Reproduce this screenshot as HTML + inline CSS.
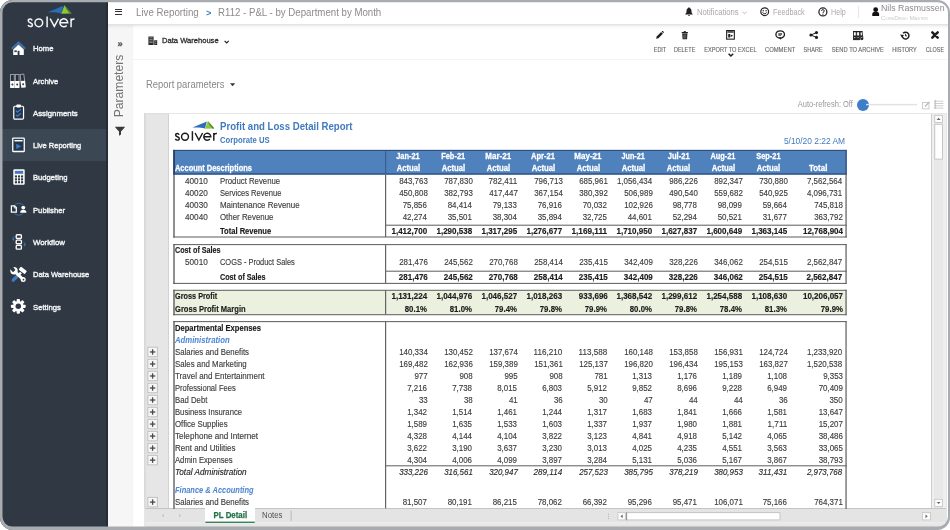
<!DOCTYPE html>
<html><head><meta charset="utf-8"><title>Solver - Live Reporting</title>
<style>
html,body{margin:0;padding:0;background:#fff;}
body{width:950px;height:530px;overflow:hidden;position:relative;font-family:"Liberation Sans", sans-serif;}
#root{position:absolute;left:0;top:0;width:950px;height:530px;overflow:hidden;will-change:transform;filter:blur(0.4px);}
#root span{position:absolute;white-space:pre;display:block;}
#root div{box-sizing:border-box;}
svg{position:absolute;overflow:visible;}
</style></head><body><div id="root">
<div style="position:absolute;left:0px;top:0px;width:950px;height:530px;background:#ffffff;"></div>
<div style="position:absolute;left:0px;top:0px;width:108px;height:530px;background:#2f3843;"></div>
<div style="position:absolute;left:0px;top:129.3px;width:108px;height:32px;background:#3c4754;"></div>
<div style="position:absolute;left:105.8px;top:0px;width:2.2px;height:530px;background:#272d36;"></div>
<svg style="left:0;top:0" width="108" height="32" viewBox="0 0 108 32"><g transform="translate(27.5 27.2) scale(1.12) translate(-174.9 -140.7)">
<path d="M192.5 127.6 L206.9 121.5 L205 128.5 C201 127.3 196.5 127.2 192.5 127.6Z" fill="#2a6db8"/>
<path d="M207.9 121.0 L205 128.7 L214.4 128.5Z" fill="#8dc63f"/>
<path d="M207.9 121.0 L214.4 128.5 L212.4 128.55 L209.3 124.2Z" fill="#35651f" opacity=".7"/>
<g fill="none" stroke="#f4f5f7" stroke-width="1.35">
<path d="M179.1 134.7 C178.7 133.7 177.9 133.4 177.3 133.4 C176.2 133.4 175.6 134.1 175.6 134.9 C175.6 136 176.6 136.4 177.4 136.7 C178.4 137.1 179.3 137.5 179.3 138.5 C179.3 139.5 178.4 140.1 177.4 140.1 C176.4 140.1 175.7 139.6 175.4 138.7"/>
<circle cx="185" cy="136.75" r="3.45"/>
<path d="M192.4 131.2 V140.7"/>
<path d="M195.1 133 L198.85 140 L202.6 133" stroke-linejoin="miter"/>
<path d="M203.9 136.75 H210.8 A3.5 3.5 0 1 0 209.9 139.1"/>
<path d="M213.8 133 V140.7 M213.8 135.8 C213.8 134.1 215 133.3 216.9 133.5"/>
</g></g></svg>
<svg style="left:11px;top:41px" width="15" height="15" viewBox="0 0 15 15"><path d="M7.5 0 L0 7 L1.7 8.6 L7.5 3.2 L13.3 8.6 L15 7 Z" fill="#3f6da6"/>
<path d="M7.5 3.6 L2.2 8.6 V14 H12.8 V8.6 Z" fill="#ffffff"/>
<rect x="6.6" y="9.8" width="1.9" height="4.2" fill="#2f3843"/><rect x="3.4" y="9.4" width="2.4" height="1.7" fill="#2f3843"/></svg>
<svg style="left:10.4px;top:73.9px" width="16.4" height="14.2" viewBox="0 0 16.4 14.2"><rect x="0.55" y="0.45" width="3.7" height="7.4" fill="#262d37" stroke="#a3a9b1" stroke-width=".9"/><rect x="0.1" y="7.1" width="4.6" height="6.8" rx=".5" fill="#ffffff"/><circle cx="2.4" cy="10.5" r="1" fill="#2f3843"/><rect x="5.3500000000000005" y="0.45" width="3.7" height="7.4" fill="#262d37" stroke="#a3a9b1" stroke-width=".9"/><rect x="4.9" y="7.1" width="4.6" height="6.8" rx=".5" fill="#ffffff"/><circle cx="7.2" cy="10.5" r="1" fill="#2f3843"/><g transform="rotate(-7 11.4 13.9)"><rect x="11.75" y="0.45" width="3.7" height="7.4" fill="#262d37" stroke="#a3a9b1" stroke-width=".9"/><rect x="11.3" y="7.1" width="4.6" height="6.8" rx=".5" fill="#ffffff"/><circle cx="13.600000000000001" cy="10.5" r="1" fill="#2f3843"/></g></svg>
<svg style="left:12.7px;top:104.2px" width="11.3" height="16" viewBox="0 0 12 17"><rect x="0.8" y="2.4" width="10.4" height="13.6" rx="1.2" fill="#26344b" stroke="#ffffff" stroke-width="1.3"/>
<rect x="3.6" y="0.6" width="4.8" height="3.2" rx=".8" fill="#ffffff"/>
<path d="M3.2 7.2 L4.8 8.8 L8.4 5.6" fill="none" stroke="#3d7dc8" stroke-width="1.3"/>
<path d="M3.2 11.4 L4.8 13 L8.4 9.8" fill="none" stroke="#3d7dc8" stroke-width="1.3"/></svg>
<svg style="left:11.8px;top:136.7px" width="13" height="15.6" viewBox="0 0 14 16"><rect x="0.8" y="0.8" width="12.4" height="14.4" rx=".6" fill="#26344b" stroke="#ffffff" stroke-width="1.4"/>
<rect x="2.6" y="2.8" width="8.8" height="1.6" fill="#ffffff"/>
<path d="M4.6 6.8 L10 9.6 L4.6 12.4 Z" fill="#3d7dc8"/></svg>
<svg style="left:12.8px;top:169px" width="12" height="16" viewBox="0 0 12 16"><rect x="0.3" y="0.3" width="11.4" height="15.4" rx="1.2" fill="#ffffff"/>
<rect x="1.8" y="1.8" width="8.4" height="3" fill="#4878b4"/>
<g fill="#2f3843"><rect x="1.9" y="6.4" width="2.1" height="2.1"/><rect x="4.95" y="6.4" width="2.1" height="2.1"/><rect x="8" y="6.4" width="2.1" height="2.1"/>
<rect x="1.9" y="9.3" width="2.1" height="2.1"/><rect x="4.95" y="9.3" width="2.1" height="2.1"/><rect x="8" y="9.3" width="2.1" height="2.1"/>
<rect x="1.9" y="12.2" width="2.1" height="2.1"/><rect x="4.95" y="12.2" width="2.1" height="2.1"/><rect x="8" y="12.2" width="2.1" height="2.1"/></g></svg>
<svg style="left:10px;top:202px" width="18" height="16" viewBox="0 0 18 16"><circle cx="8.8" cy="7.2" r="6" fill="none" stroke="#3468a8" stroke-width="1.1"/>
<rect x="-0.2" y="2.6" width="8" height="8.8" fill="#2f3843"/><rect x="9.4" y="3" width="8" height="8.4" fill="#2f3843"/>
<path d="M1.4 3.9 H4.6 L6.3 5.6 V10.2 H1.4 Z" fill="none" stroke="#ffffff" stroke-width="1.25"/><path d="M4.3 3.6 V6 H6.6" fill="none" stroke="#ffffff" stroke-width=".8"/>
<circle cx="13.3" cy="5.6" r="1.95" fill="#ffffff"/><path d="M10.2 10.8 C10.2 8.5 11.4 7.8 13.3 7.8 C15.2 7.8 16.4 8.5 16.4 10.8 Z" fill="#ffffff"/></svg>
<svg style="left:10.5px;top:233.8px" width="16" height="16.4" viewBox="0 0 16 16.4"><g fill="none" stroke="#ffffff" stroke-width="1.35"><rect x="5.2" y="0.8" width="5.2" height="3.7" rx=".9"/><rect x="5.2" y="6.1" width="5.2" height="3.7" rx=".9"/><rect x="5.2" y="11.4" width="5.2" height="3.7" rx=".9"/></g>
<path d="M3.6 2.6 C2 3.2 1.6 4.4 2.2 5.6 M12.6 8.2 C14 8.8 14.4 10 13.8 11.2" fill="none" stroke="#3d7dc8" stroke-width=".9"/>
<path d="M1.2 4.6 L3.6 5 L2.4 7Z M14.8 10.2 L12.4 10.6 L13.6 12.6Z" fill="#3d7dc8"/></svg>
<svg style="left:10.3px;top:266.6px" width="17" height="15" viewBox="0 0 17 15"><path d="M11 5.6 L4.4 12" stroke="#ffffff" stroke-width="2.3"/>
<path d="M6.4 10 L3.2 13.2" stroke="#3d7dc8" stroke-width="3.3" stroke-linecap="round"/>
<rect x="9" y="1.4" width="7.6" height="3.9" rx=".7" fill="#ffffff" transform="rotate(38 12.8 3.3)"/>
<path d="M4.4 4.2 L12.6 12" stroke="#ffffff" stroke-width="3.1"/>
<circle cx="4" cy="3.8" r="3.7" fill="#ffffff"/><path d="M-0.6 1.2 L2.4 -1.2 L5.4 3 L3 5.2Z" fill="#2f3843"/>
<circle cx="13.2" cy="12.4" r="2.5" fill="#ffffff"/><circle cx="13.5" cy="12.7" r=".85" fill="#2f3843"/></svg>
<svg style="left:10.8px;top:298.7px" width="14.6" height="14.6" viewBox="0 0 16 16"><rect x="6.2" y="-0.1" width="3.6" height="4" rx=".9" fill="#ffffff" transform="rotate(0 8 8)"/><rect x="6.2" y="-0.1" width="3.6" height="4" rx=".9" fill="#ffffff" transform="rotate(45 8 8)"/><rect x="6.2" y="-0.1" width="3.6" height="4" rx=".9" fill="#ffffff" transform="rotate(90 8 8)"/><rect x="6.2" y="-0.1" width="3.6" height="4" rx=".9" fill="#ffffff" transform="rotate(135 8 8)"/><rect x="6.2" y="-0.1" width="3.6" height="4" rx=".9" fill="#ffffff" transform="rotate(180 8 8)"/><rect x="6.2" y="-0.1" width="3.6" height="4" rx=".9" fill="#ffffff" transform="rotate(225 8 8)"/><rect x="6.2" y="-0.1" width="3.6" height="4" rx=".9" fill="#ffffff" transform="rotate(270 8 8)"/><rect x="6.2" y="-0.1" width="3.6" height="4" rx=".9" fill="#ffffff" transform="rotate(315 8 8)"/><circle cx="8" cy="8" r="5.7" fill="#ffffff"/><circle cx="8" cy="8" r="3" fill="#2f3843"/></svg>
<div style="position:absolute;left:108px;top:0px;width:842px;height:24px;background:#ffffff;"></div>
<div style="position:absolute;left:115px;top:8.6px;width:6.6px;height:1.2px;background:#333;"></div>
<div style="position:absolute;left:115px;top:11.2px;width:6.6px;height:1.2px;background:#333;"></div>
<div style="position:absolute;left:115px;top:13.8px;width:6.6px;height:1.2px;background:#333;"></div>
<svg style="left:685px;top:7.4px" width="8" height="9" viewBox="0 0 8 9"><path d="M4 0.3 C4.5 0.3 4.8 .7 4.7 1.1 C6 1.6 6.5 2.8 6.5 4.2 C6.5 5.8 7 6.4 7.7 7 V7.5 H0.3 V7 C1 6.4 1.5 5.8 1.5 4.2 C1.5 2.8 2 1.6 3.3 1.1 C3.2 .7 3.5 .3 4 .3Z M3 7.9 H5 C5 8.5 4.6 8.8 4 8.8 C3.4 8.8 3 8.5 3 7.9Z" fill="#222"/></svg>
<svg style="left:742.4px;top:11px" width="5" height="4" viewBox="0 0 5 4"><path d="M0.5 0.8 L2.5 2.8 L4.5 0.8" fill="none" stroke="#b4b4b4" stroke-width=".9"/></svg>
<svg style="left:760.4px;top:6.8px" width="9.4" height="9.4" viewBox="0 0 9.4 9.4"><circle cx="4.7" cy="4.7" r="3.9" fill="none" stroke="#222" stroke-width="1.2"/><circle cx="3.3" cy="3.7" r=".7" fill="#222"/><circle cx="6.1" cy="3.7" r=".7" fill="#222"/><path d="M2.6 5.4 C3.4 7.1 6 7.1 6.8 5.4" fill="none" stroke="#222" stroke-width="1"/></svg>
<svg style="left:817.6px;top:6.7px" width="9.8" height="9.8" viewBox="0 0 9.8 9.8"><circle cx="4.9" cy="4.9" r="4" fill="none" stroke="#222" stroke-width="1.25"/><path d="M3.5 3.9 C3.5 2.2 6.3 2.2 6.3 3.9 C6.3 4.9 4.9 4.9 4.9 6" fill="none" stroke="#222" stroke-width="1"/><circle cx="4.9" cy="7.2" r=".6" fill="#222"/></svg>
<div style="position:absolute;left:857.6px;top:6px;width:1px;height:12px;background:#e6e6e6;"></div>
<svg style="left:872.0px;top:6.8px" width="7.4" height="9.3" viewBox="0 0 8 10"><circle cx="4" cy="2.9" r="2.6" fill="#111"/><path d="M0.3 9.6 V7.8 C0.3 6 1.8 5.2 4 5.2 C6.2 5.2 7.7 6 7.7 7.8 V9.6Z" fill="#111"/></svg>
<div style="position:absolute;left:108px;top:25px;width:23.5px;height:505px;background:#f6f6f6;"></div>
<div style="position:absolute;left:131.5px;top:25px;width:1.5px;height:505px;background:linear-gradient(90deg,#ededed,#fafafa);"></div>
<div style="position:absolute;left:108px;top:24px;width:842px;height:5px;background:linear-gradient(rgba(0,0,0,.13),rgba(0,0,0,.04) 45%,rgba(0,0,0,0));"></div>
<svg style="left:114.6px;top:125.8px" width="10" height="10" viewBox="0 0 10 10"><path d="M0.3 0.8 H9.7 V1.6 L6 5.4 V8.4 L4 9.8 V5.4 L0.3 1.6Z" fill="#3a3a3a"/></svg>
<svg style="left:148px;top:36.4px" width="10" height="9.4" viewBox="0 0 10 9.4"><path d="M0.4 0.4 H5.6 V9 H0.4Z M6.2 4.2 H9.2 V9 H6.2Z" fill="#2a2a2a"/><g fill="#fff" opacity=".75"><rect x="1.3" y="1.6" width="3.4" height=".55"/><rect x="1.3" y="3.2" width="3.4" height=".55"/><rect x="1.3" y="4.8" width="3.4" height=".55"/><rect x="1.3" y="6.4" width="3.4" height=".55"/><rect x="7" y="5.6" width="1.4" height=".55"/><rect x="7" y="7.1" width="1.4" height=".55"/></g></svg>
<svg style="left:223.6px;top:39.6px" width="5.4" height="4" viewBox="0 0 5.4 4"><path d="M0.6 0.8 L2.7 2.9 L4.8 0.8" fill="none" stroke="#222" stroke-width="1.2"/></svg>
<svg style="left:655.0px;top:31.0px" width="9.2" height="8.6" viewBox="0 0 10 10"><path d="M1 9 L1.6 6.4 L6.8 1.2 L8.8 3.2 L3.6 8.4 Z" fill="#1e1e1e"/><path d="M7.4 .6 L8 0 C8.4 -.2 8.8 0 9.2 .4 L9.6 .8 C10 1.2 10 1.6 9.8 2 L9.4 2.6Z" fill="#1e1e1e"/></svg>
<svg style="left:681.4px;top:31.4px" width="7.6" height="8.6" viewBox="0 0 8 10"><rect x="0.4" y="1.2" width="7.2" height="1.3" rx=".3" fill="#1e1e1e"/><rect x="2.7" y="0.2" width="2.6" height="1.3" fill="#1e1e1e"/><path d="M1 3 H7 L6.6 9.7 H1.4Z" fill="#1e1e1e"/><g stroke="#fff" stroke-width=".6" opacity=".55"><path d="M2.8 4 V8.8 M4 4 V8.8 M5.2 4 V8.8"/></g></svg>
<svg style="left:726.0px;top:30.2px" width="9.0" height="9.7" viewBox="0 0 9.6 10.6"><rect x="0.6" y="0.6" width="8.4" height="9.4" fill="none" stroke="#1e1e1e" stroke-width="1.2"/><rect x="1.4" y="1.4" width="6.8" height="1.5" fill="#1e1e1e"/><path d="M2.3 4.3 H4.4 V8.3 H2.3Z M5 4.9 L7.7 6.3 L5 7.7Z" fill="#1e1e1e"/></svg>
<svg style="left:727.5px;top:53px" width="5.8" height="4" viewBox="0 0 5.8 4"><path d="M0.6 0.7 L2.9 3 L5.2 0.7" fill="none" stroke="#1e1e1e" stroke-width="1.5"/></svg>
<svg style="left:774.8px;top:30.0px" width="10.4" height="10" viewBox="0 0 10.4 10"><ellipse cx="5.2" cy="4.4" rx="4.3" ry="3.6" fill="#fff" stroke="#1e1e1e" stroke-width="1.3"/><path d="M3.9 7.6 L5.5 9.8 L6.7 7.6Z" fill="#1e1e1e"/><path d="M3.3 3.5 H7.1 M3.3 4.5 H7.1 M3.3 5.5 H6.2" stroke="#1e1e1e" stroke-width=".65"/></svg>
<svg style="left:808.6px;top:31.0px" width="9.4" height="8" viewBox="0 0 9.4 8"><path d="M7.4 1.6 L2 4 L7.4 6.4" fill="none" stroke="#1e1e1e" stroke-width="1"/><circle cx="7.5" cy="1.6" r="1.55" fill="#1e1e1e"/><circle cx="1.9" cy="4" r="1.55" fill="#1e1e1e"/><circle cx="7.5" cy="6.4" r="1.55" fill="#1e1e1e"/></svg>
<svg style="left:852.6px;top:31.0px" width="10.4" height="9.2" viewBox="0 0 10.4 9.2"><g fill="#fff" stroke="#1e1e1e" stroke-width=".85"><rect x="0.5" y="0.5" width="2.7" height="8.2"/><rect x="3.7" y="0.5" width="2.7" height="8.2"/><path d="M7 0.9 L9.1 0.5 L10 8.3 L7.9 8.7Z"/></g>
<path d="M0.1 0 H6.8 V1.3 H0.1Z M6.7 0.3 L9.4 -0.1 L9.55 1.1 L6.85 1.5Z" fill="#1e1e1e"/>
<path d="M0.5 4.4 H3.2 V8.7 H0.5Z M3.7 4.4 H6.4 V8.7 H3.7Z M7.45 4.5 L9.55 4.15 L10 8.3 L7.9 8.7Z" fill="#1e1e1e"/>
<g fill="#fff"><rect x="1.4" y="6" width=".9" height="1.1"/><rect x="4.6" y="6" width=".9" height="1.1"/><rect x="8.35" y="5.9" width=".8" height="1"/></g></svg>
<svg style="left:899.6px;top:30.6px" width="10.2" height="9.4" viewBox="0 0 10.2 9.4"><path d="M2.2 4.7 A3.4 3.4 0 1 0 3.1 2.3" fill="none" stroke="#1e1e1e" stroke-width="1.5"/><path d="M0.1 3.6 L4.1 3.9 L1.9 6.6Z" fill="#1e1e1e"/><path d="M5.5 2.8 V4.9 H7.1" fill="none" stroke="#1e1e1e" stroke-width=".95"/></svg>
<svg style="left:930.9px;top:31.3px" width="8" height="8" viewBox="0 0 8 8"><path d="M1.3 1.3 L6.7 6.7 M6.7 1.3 L1.3 6.7" stroke="#1e1e1e" stroke-width="2.5" stroke-linecap="round"/></svg>
<div style="position:absolute;left:133px;top:59px;width:814px;height:1px;background:#f4f4f4;"></div>
<svg style="left:229.8px;top:83.4px" width="5.2" height="3.6" viewBox="0 0 5.2 3.6"><path d="M0.5 0.5 H4.7 L2.6 3Z" fill="#333" stroke="#333" stroke-width=".5" stroke-linejoin="round"/></svg>
<div style="position:absolute;left:856.9px;top:98.6px;width:12px;height:12px;background:#3e7ec9;border-radius:50%;"></div>
<svg style="left:922px;top:100.6px" width="8.4" height="8.4" viewBox="0 0 8.4 8.4"><rect x="0.5" y="1.5" width="6.4" height="6.4" fill="none" stroke="#c8c8c8" stroke-width=".9"/><path d="M3 5.6 L7.4 1" stroke="#bdbdbd" stroke-width="1.4"/></svg>
<svg style="left:934.4px;top:100.2px" width="9.4" height="9.2" viewBox="0 0 9.4 9.2"><g stroke="#c8c8c8" stroke-width=".9"><path d="M0 1.2 H9.4 M0 3.5 H9.4 M0 5.8 H9.4 M0 8.1 H9.4"/><path d="M1.3 0 V9" stroke-width="1.6"/></g></svg>
<div style="position:absolute;left:144px;top:112.6px;width:803px;height:413px;background:#e6e6e6;"></div>
<div style="position:absolute;left:145px;top:113.6px;width:801px;height:411px;background:#ffffff;"></div>
<div style="position:absolute;left:144px;top:113px;width:24.6px;height:395px;background:#e6e6e6;"></div>
<div style="position:absolute;left:144px;top:113px;width:3px;height:395px;background:linear-gradient(90deg,#d6d6d6,#e6e6e6);"></div>
<div style="position:absolute;left:147px;top:113px;width:21px;height:2px;background:linear-gradient(#dcdcdc,#e6e6e6);"></div>
<div style="position:absolute;left:168px;top:113.6px;width:1px;height:394.4px;background:#d2d2d2;"></div>
<svg style="left:0;top:0" width="240" height="150" viewBox="0 0 240 150"><g transform="translate(174.9 140.7) scale(1) translate(-174.9 -140.7)">
<path d="M192.5 127.6 L206.9 121.5 L205 128.5 C201 127.3 196.5 127.2 192.5 127.6Z" fill="#2a6db8"/>
<path d="M207.9 121.0 L205 128.7 L214.4 128.5Z" fill="#8dc63f"/>
<path d="M207.9 121.0 L214.4 128.5 L212.4 128.55 L209.3 124.2Z" fill="#35651f" opacity=".7"/>
<g fill="none" stroke="#1c1c1c" stroke-width="1.45">
<path d="M179.1 134.7 C178.7 133.7 177.9 133.4 177.3 133.4 C176.2 133.4 175.6 134.1 175.6 134.9 C175.6 136 176.6 136.4 177.4 136.7 C178.4 137.1 179.3 137.5 179.3 138.5 C179.3 139.5 178.4 140.1 177.4 140.1 C176.4 140.1 175.7 139.6 175.4 138.7"/>
<circle cx="185" cy="136.75" r="3.45"/>
<path d="M192.4 131.2 V140.7"/>
<path d="M195.1 133 L198.85 140 L202.6 133" stroke-linejoin="miter"/>
<path d="M203.9 136.75 H210.8 A3.5 3.5 0 1 0 209.9 139.1"/>
<path d="M213.8 133 V140.7 M213.8 135.8 C213.8 134.1 215 133.3 216.9 133.5"/>
</g></g></svg>
<div style="position:absolute;left:931px;top:113.6px;width:15px;height:394.4px;background:#e8e8e8;"></div>
<div style="position:absolute;left:931px;top:113.6px;width:1px;height:394.4px;background:#cdcdcd;"></div>
<div style="position:absolute;left:932px;top:113.6px;width:2px;height:394.4px;background:#efefef;"></div>
<div style="position:absolute;left:943px;top:113.6px;width:3px;height:394.4px;background:#efefef;"></div>
<!--vs-->
<div style="position:absolute;left:145px;top:508px;width:801px;height:14.2px;background:#e4e4e4;"></div>
<div style="position:absolute;left:145px;top:522.2px;width:801px;height:4.6px;background:linear-gradient(#ececec,#e4e4e4);"></div>
<div style="position:absolute;left:145px;top:507.5px;width:801px;height:1px;background:#c4c4c4;"></div>
<div style="position:absolute;left:205.4px;top:508px;width:49.4px;height:14.4px;background:#ffffff;"></div>
<!--POSTL-->
<svg style="left:0;top:0" width="950" height="530" viewBox="0 0 950 530"><rect x="866" y="103.9" width="51" height="1.4" fill="#e2e2e2"/><rect x="173.2" y="149.9" width="673.5999999999999" height="24.7" fill="#4f81bd"/><rect x="173.2" y="149.9" width="673.5999999999999" height="1.1" fill="#34507a"/><rect x="173.2" y="173.3" width="673.5999999999999" height="1.3" fill="#2f4f80"/><rect x="173.2" y="149.9" width="1.8" height="24.7" fill="#2c4165"/><rect x="845.3" y="149.9" width="1.5" height="24.7" fill="#3a5a8c"/><rect x="385.0" y="151" width="1.2" height="22.4" fill="#3a5f97"/><rect x="173.2" y="236.475" width="673.5999999999999" height="1.05" fill="#646464"/><rect x="173.325" y="174.075" width="1.35" height="63.45000000000002" fill="#5a5a5a"/><rect x="845.425" y="174.075" width="1.25" height="63.45000000000002" fill="#646464"/><rect x="385.0" y="174.6" width="1.2" height="62.400000000000006" fill="#646464"/><rect x="386" y="224.67499999999998" width="460.79999999999995" height="1.05" fill="#646464"/><rect x="173.2" y="244.075" width="673.5999999999999" height="1.05" fill="#646464"/><rect x="173.2" y="282.875" width="673.5999999999999" height="1.05" fill="#646464"/><rect x="173.325" y="244.075" width="1.35" height="39.849999999999966" fill="#5a5a5a"/><rect x="845.425" y="244.075" width="1.25" height="39.849999999999966" fill="#646464"/><rect x="385.0" y="244.6" width="1.2" height="38.79999999999998" fill="#646464"/><rect x="386" y="270.675" width="460.79999999999995" height="1.05" fill="#646464"/><rect x="173.2" y="290.3" width="673.5999999999999" height="24.399999999999977" fill="#ebf1de"/><rect x="173.2" y="289.77500000000003" width="673.5999999999999" height="1.05" fill="#646464"/><rect x="173.2" y="314.175" width="673.5999999999999" height="1.05" fill="#646464"/><rect x="173.325" y="289.77500000000003" width="1.35" height="25.449999999999932" fill="#5a5a5a"/><rect x="845.425" y="289.77500000000003" width="1.25" height="25.449999999999932" fill="#646464"/><rect x="385.0" y="290.3" width="1.2" height="24.399999999999977" fill="#646464"/><rect x="173.2" y="321.07500000000005" width="673.5999999999999" height="1.05" fill="#646464"/><rect x="173.325" y="321.07500000000005" width="1.35" height="187.8499999999999" fill="#5a5a5a"/><rect x="845.425" y="321.07500000000005" width="1.25" height="187.8499999999999" fill="#646464"/><rect x="385.0" y="321.6" width="1.2" height="186.79999999999995" fill="#646464"/><rect x="147.4" y="346.75" width="10.4" height="10.4" fill="#bdbdbd"/><rect x="148.3" y="347.65" width="8.6" height="8.6" fill="#f6f6f6"/><rect x="149.9" y="351.3" width="5.4" height="1.3" fill="#4a4a4a"/><rect x="151.95" y="349.25" width="1.3" height="5.4" fill="#4a4a4a"/><rect x="147.4" y="358.77" width="10.4" height="10.4" fill="#bdbdbd"/><rect x="148.3" y="359.66999999999996" width="8.6" height="8.6" fill="#f6f6f6"/><rect x="149.9" y="363.32" width="5.4" height="1.3" fill="#4a4a4a"/><rect x="151.95" y="361.27" width="1.3" height="5.4" fill="#4a4a4a"/><rect x="147.4" y="370.79" width="10.4" height="10.4" fill="#bdbdbd"/><rect x="148.3" y="371.69" width="8.6" height="8.6" fill="#f6f6f6"/><rect x="149.9" y="375.34000000000003" width="5.4" height="1.3" fill="#4a4a4a"/><rect x="151.95" y="373.29" width="1.3" height="5.4" fill="#4a4a4a"/><rect x="147.4" y="382.81" width="10.4" height="10.4" fill="#bdbdbd"/><rect x="148.3" y="383.71" width="8.6" height="8.6" fill="#f6f6f6"/><rect x="149.9" y="387.36" width="5.4" height="1.3" fill="#4a4a4a"/><rect x="151.95" y="385.31" width="1.3" height="5.4" fill="#4a4a4a"/><rect x="147.4" y="394.83" width="10.4" height="10.4" fill="#bdbdbd"/><rect x="148.3" y="395.72999999999996" width="8.6" height="8.6" fill="#f6f6f6"/><rect x="149.9" y="399.38" width="5.4" height="1.3" fill="#4a4a4a"/><rect x="151.95" y="397.33" width="1.3" height="5.4" fill="#4a4a4a"/><rect x="147.4" y="406.85" width="10.4" height="10.4" fill="#bdbdbd"/><rect x="148.3" y="407.75" width="8.6" height="8.6" fill="#f6f6f6"/><rect x="149.9" y="411.40000000000003" width="5.4" height="1.3" fill="#4a4a4a"/><rect x="151.95" y="409.35" width="1.3" height="5.4" fill="#4a4a4a"/><rect x="147.4" y="418.87" width="10.4" height="10.4" fill="#bdbdbd"/><rect x="148.3" y="419.77" width="8.6" height="8.6" fill="#f6f6f6"/><rect x="149.9" y="423.42" width="5.4" height="1.3" fill="#4a4a4a"/><rect x="151.95" y="421.37" width="1.3" height="5.4" fill="#4a4a4a"/><rect x="147.4" y="430.89" width="10.4" height="10.4" fill="#bdbdbd"/><rect x="148.3" y="431.78999999999996" width="8.6" height="8.6" fill="#f6f6f6"/><rect x="149.9" y="435.44" width="5.4" height="1.3" fill="#4a4a4a"/><rect x="151.95" y="433.39" width="1.3" height="5.4" fill="#4a4a4a"/><rect x="147.4" y="442.90999999999997" width="10.4" height="10.4" fill="#bdbdbd"/><rect x="148.3" y="443.80999999999995" width="8.6" height="8.6" fill="#f6f6f6"/><rect x="149.9" y="447.46" width="5.4" height="1.3" fill="#4a4a4a"/><rect x="151.95" y="445.40999999999997" width="1.3" height="5.4" fill="#4a4a4a"/><rect x="147.4" y="454.93" width="10.4" height="10.4" fill="#bdbdbd"/><rect x="148.3" y="455.83" width="8.6" height="8.6" fill="#f6f6f6"/><rect x="149.9" y="459.48" width="5.4" height="1.3" fill="#4a4a4a"/><rect x="151.95" y="457.43" width="1.3" height="5.4" fill="#4a4a4a"/><rect x="386" y="465.27500000000003" width="460.79999999999995" height="1.05" fill="#646464"/><rect x="147.4" y="496.90000000000003" width="10.4" height="10.4" fill="#bdbdbd"/><rect x="148.3" y="497.8" width="8.6" height="8.6" fill="#f6f6f6"/><rect x="149.9" y="501.45000000000005" width="5.4" height="1.3" fill="#4a4a4a"/><rect x="151.95" y="499.40000000000003" width="1.3" height="5.4" fill="#4a4a4a"/></svg>
<span style="left:32.90px;top:45.21px;font-size:8.1px;line-height:8.1px;color:#f1f3f5;transform:scaleX(0.945);transform-origin:left center;-webkit-text-stroke:0.42px #f1f3f5;">Home</span>
<span style="left:32.90px;top:77.51px;font-size:8.1px;line-height:8.1px;color:#f1f3f5;transform:scaleX(0.937);transform-origin:left center;-webkit-text-stroke:0.42px #f1f3f5;">Archive</span>
<span style="left:32.90px;top:109.81px;font-size:8.1px;line-height:8.1px;color:#f1f3f5;transform:scaleX(0.965);transform-origin:left center;-webkit-text-stroke:0.42px #f1f3f5;">Assignments</span>
<span style="left:32.90px;top:142.11px;font-size:8.1px;line-height:8.1px;color:#f1f3f5;transform:scaleX(0.925);transform-origin:left center;-webkit-text-stroke:0.42px #f1f3f5;">Live Reporting</span>
<span style="left:32.90px;top:174.41px;font-size:8.1px;line-height:8.1px;color:#f1f3f5;transform:scaleX(0.943);transform-origin:left center;-webkit-text-stroke:0.42px #f1f3f5;">Budgeting</span>
<span style="left:32.90px;top:206.71px;font-size:8.1px;line-height:8.1px;color:#f1f3f5;transform:scaleX(0.948);transform-origin:left center;-webkit-text-stroke:0.42px #f1f3f5;">Publisher</span>
<span style="left:32.90px;top:239.01px;font-size:8.1px;line-height:8.1px;color:#f1f3f5;transform:scaleX(0.966);transform-origin:left center;-webkit-text-stroke:0.42px #f1f3f5;">Workflow</span>
<span style="left:32.90px;top:271.31px;font-size:8.1px;line-height:8.1px;color:#f1f3f5;transform:scaleX(0.930);transform-origin:left center;-webkit-text-stroke:0.42px #f1f3f5;">Data Warehouse</span>
<span style="left:32.90px;top:303.61px;font-size:8.1px;line-height:8.1px;color:#f1f3f5;transform:scaleX(0.950);transform-origin:left center;-webkit-text-stroke:0.42px #f1f3f5;">Settings</span>
<span style="left:136.00px;top:7.18px;font-size:10.6px;line-height:10.6px;color:#8b8b8b;transform:scaleX(0.918);transform-origin:left center;">Live Reporting</span>
<span style="left:205.82px;top:8.16px;font-size:9.5px;line-height:9.5px;color:#3e7fc6;font-weight:700;transform:scaleX(0.971);transform-origin:center center;">&gt;</span>
<span style="left:217.80px;top:7.18px;font-size:10.6px;line-height:10.6px;color:#8b8b8b;transform:scaleX(0.912);transform-origin:left center;">R112 - P&amp;L - by Department by Month</span>
<span style="left:697.30px;top:8.45px;font-size:8.4px;line-height:8.4px;color:#a9a9a9;transform:scaleX(0.914);transform-origin:left center;">Notifications</span>
<span style="left:773.00px;top:8.45px;font-size:8.4px;line-height:8.4px;color:#a9a9a9;transform:scaleX(0.862);transform-origin:left center;">Feedback</span>
<span style="left:831.00px;top:8.45px;font-size:8.4px;line-height:8.4px;color:#a9a9a9;transform:scaleX(0.853);transform-origin:left center;">Help</span>
<span style="left:881.00px;top:3.64px;font-size:8.8px;line-height:8.8px;color:#8a8a8a;">Nils Rasmussen</span>
<span style="left:881.00px;top:15.31px;font-size:6.2px;line-height:6.2px;color:#c9c9c9;font-variant:small-caps;">CoreDemo Master</span>
<span style="left:117.39px;top:39.42px;font-size:9.4px;line-height:9.4px;color:#5a5a5a;font-weight:700;-webkit-text-stroke:0.3px #5a5a5a;">»</span>
<span style="left:88.38px;top:79.54px;font-size:12px;line-height:12px;color:#747474;transform:rotate(-90deg) scaleX(1.011);transform-origin:center center;">Parameters</span>
<span style="left:161.50px;top:37.31px;font-size:8.1px;line-height:8.1px;color:#2b2b2b;transform:scaleX(0.937);transform-origin:left center;-webkit-text-stroke:0.3px #2b2b2b;">Data Warehouse</span>
<span style="left:651.82px;top:45.89px;font-size:7.0px;line-height:7.0px;color:#666;transform:scaleX(0.784);transform-origin:center center;-webkit-text-stroke:0.12px #666;">EDIT</span>
<span style="left:671.28px;top:45.89px;font-size:7.0px;line-height:7.0px;color:#666;transform:scaleX(0.786);transform-origin:center center;-webkit-text-stroke:0.12px #666;">DELETE</span>
<span style="left:697.68px;top:45.89px;font-size:7.0px;line-height:7.0px;color:#666;transform:scaleX(0.805);transform-origin:center center;-webkit-text-stroke:0.12px #666;">EXPORT TO EXCEL</span>
<span style="left:761.71px;top:45.89px;font-size:7.0px;line-height:7.0px;color:#666;transform:scaleX(0.838);transform-origin:center center;-webkit-text-stroke:0.12px #666;">COMMENT</span>
<span style="left:801.24px;top:45.89px;font-size:7.0px;line-height:7.0px;color:#666;transform:scaleX(0.788);transform-origin:center center;-webkit-text-stroke:0.12px #666;">SHARE</span>
<span style="left:825.53px;top:45.89px;font-size:7.0px;line-height:7.0px;color:#666;transform:scaleX(0.821);transform-origin:center center;-webkit-text-stroke:0.12px #666;">SEND TO ARCHIVE</span>
<span style="left:888.66px;top:45.89px;font-size:7.0px;line-height:7.0px;color:#666;transform:scaleX(0.790);transform-origin:center center;-webkit-text-stroke:0.12px #666;">HISTORY</span>
<span style="left:922.53px;top:45.89px;font-size:7.0px;line-height:7.0px;color:#666;transform:scaleX(0.771);transform-origin:center center;-webkit-text-stroke:0.12px #666;">CLOSE</span>
<span style="left:146.40px;top:79.74px;font-size:10.3px;line-height:10.3px;color:#878787;transform:scaleX(0.914);transform-origin:left center;">Report parameters</span>
<span style="left:787.73px;top:100.24px;font-size:8.8px;line-height:8.8px;color:#989898;transform:scaleX(0.849);transform-origin:right center;">Auto-refresh: Off</span>
<span style="left:219.80px;top:121.18px;font-size:10.8px;line-height:10.8px;color:#417abd;font-weight:700;transform:scaleX(0.891);transform-origin:left center;">Profit and Loss Detail Report</span>
<span style="left:219.80px;top:136.34px;font-size:8.8px;line-height:8.8px;color:#417abd;font-weight:700;transform:scaleX(0.875);transform-origin:left center;">Corporate US</span>
<span style="left:780.52px;top:136.64px;font-size:8.8px;line-height:8.8px;color:#417abd;transform:scaleX(0.955);transform-origin:right center;">5/10/20 2:22 AM</span>
<span style="left:394.36px;top:152.34px;font-size:8.8px;line-height:8.8px;color:#fff;font-weight:700;transform:scaleX(0.843);transform-origin:center center;-webkit-text-stroke:0.28px #fff;">Jan-21</span>
<span style="left:394.85px;top:164.24px;font-size:8.8px;line-height:8.8px;color:#fff;font-weight:700;transform:scaleX(0.874);transform-origin:center center;-webkit-text-stroke:0.28px #fff;">Actual</span>
<span style="left:439.12px;top:152.34px;font-size:8.8px;line-height:8.8px;color:#fff;font-weight:700;transform:scaleX(0.846);transform-origin:center center;-webkit-text-stroke:0.28px #fff;">Feb-21</span>
<span style="left:439.85px;top:164.24px;font-size:8.8px;line-height:8.8px;color:#fff;font-weight:700;transform:scaleX(0.874);transform-origin:center center;-webkit-text-stroke:0.28px #fff;">Actual</span>
<span style="left:484.12px;top:152.34px;font-size:8.8px;line-height:8.8px;color:#fff;font-weight:700;transform:scaleX(0.910);transform-origin:center center;-webkit-text-stroke:0.28px #fff;">Mar-21</span>
<span style="left:484.85px;top:164.24px;font-size:8.8px;line-height:8.8px;color:#fff;font-weight:700;transform:scaleX(0.874);transform-origin:center center;-webkit-text-stroke:0.28px #fff;">Actual</span>
<span style="left:529.36px;top:152.34px;font-size:8.8px;line-height:8.8px;color:#fff;font-weight:700;transform:scaleX(0.861);transform-origin:center center;-webkit-text-stroke:0.28px #fff;">Apr-21</span>
<span style="left:529.85px;top:164.24px;font-size:8.8px;line-height:8.8px;color:#fff;font-weight:700;transform:scaleX(0.874);transform-origin:center center;-webkit-text-stroke:0.28px #fff;">Actual</span>
<span style="left:573.39px;top:152.34px;font-size:8.8px;line-height:8.8px;color:#fff;font-weight:700;transform:scaleX(0.915);transform-origin:center center;-webkit-text-stroke:0.28px #fff;">May-21</span>
<span style="left:574.85px;top:164.24px;font-size:8.8px;line-height:8.8px;color:#fff;font-weight:700;transform:scaleX(0.874);transform-origin:center center;-webkit-text-stroke:0.28px #fff;">Actual</span>
<span style="left:619.12px;top:152.34px;font-size:8.8px;line-height:8.8px;color:#fff;font-weight:700;transform:scaleX(0.818);transform-origin:center center;-webkit-text-stroke:0.28px #fff;">Jun-21</span>
<span style="left:619.85px;top:164.24px;font-size:8.8px;line-height:8.8px;color:#fff;font-weight:700;transform:scaleX(0.874);transform-origin:center center;-webkit-text-stroke:0.28px #fff;">Actual</span>
<span style="left:665.58px;top:152.34px;font-size:8.8px;line-height:8.8px;color:#fff;font-weight:700;transform:scaleX(0.857);transform-origin:center center;-webkit-text-stroke:0.28px #fff;">Jul-21</span>
<span style="left:664.85px;top:164.24px;font-size:8.8px;line-height:8.8px;color:#fff;font-weight:700;transform:scaleX(0.874);transform-origin:center center;-webkit-text-stroke:0.28px #fff;">Actual</span>
<span style="left:708.39px;top:152.34px;font-size:8.8px;line-height:8.8px;color:#fff;font-weight:700;transform:scaleX(0.838);transform-origin:center center;-webkit-text-stroke:0.28px #fff;">Aug-21</span>
<span style="left:709.85px;top:164.24px;font-size:8.8px;line-height:8.8px;color:#fff;font-weight:700;transform:scaleX(0.874);transform-origin:center center;-webkit-text-stroke:0.28px #fff;">Actual</span>
<span style="left:753.87px;top:152.34px;font-size:8.8px;line-height:8.8px;color:#fff;font-weight:700;transform:scaleX(0.845);transform-origin:center center;-webkit-text-stroke:0.28px #fff;">Sep-21</span>
<span style="left:754.85px;top:164.24px;font-size:8.8px;line-height:8.8px;color:#fff;font-weight:700;transform:scaleX(0.874);transform-origin:center center;-webkit-text-stroke:0.28px #fff;">Actual</span>
<span style="left:808.41px;top:164.24px;font-size:8.8px;line-height:8.8px;color:#fff;font-weight:700;transform:scaleX(0.903);transform-origin:center center;-webkit-text-stroke:0.28px #fff;">Total</span>
<span style="left:174.80px;top:164.24px;font-size:8.8px;line-height:8.8px;color:#fff;font-weight:700;transform:scaleX(0.846);transform-origin:left center;-webkit-text-stroke:0.28px #fff;">Account Descriptions</span>
<span style="left:185.00px;top:177.00px;font-size:8.8px;line-height:8.8px;color:#3c3c3c;transform:scaleX(0.932);transform-origin:left center;-webkit-text-stroke:0.14px #3c3c3c;">40010</span>
<span style="left:219.80px;top:177.00px;font-size:8.8px;line-height:8.8px;color:#3c3c3c;transform:scaleX(0.885);transform-origin:left center;-webkit-text-stroke:0.14px #3c3c3c;">Product Revenue</span>
<span style="left:395.59px;top:177.00px;font-size:8.8px;line-height:8.8px;color:#3c3c3c;transform:scaleX(0.901);transform-origin:right center;-webkit-text-stroke:0.14px #3c3c3c;">843,763</span>
<span style="left:440.59px;top:177.00px;font-size:8.8px;line-height:8.8px;color:#3c3c3c;transform:scaleX(0.901);transform-origin:right center;-webkit-text-stroke:0.14px #3c3c3c;">787,830</span>
<span style="left:486.24px;top:177.00px;font-size:8.8px;line-height:8.8px;color:#3c3c3c;transform:scaleX(0.920);transform-origin:right center;-webkit-text-stroke:0.14px #3c3c3c;">782,411</span>
<span style="left:530.59px;top:177.00px;font-size:8.8px;line-height:8.8px;color:#3c3c3c;transform:scaleX(0.901);transform-origin:right center;-webkit-text-stroke:0.14px #3c3c3c;">796,713</span>
<span style="left:575.59px;top:177.00px;font-size:8.8px;line-height:8.8px;color:#3c3c3c;transform:scaleX(0.901);transform-origin:right center;-webkit-text-stroke:0.14px #3c3c3c;">685,961</span>
<span style="left:613.26px;top:177.00px;font-size:8.8px;line-height:8.8px;color:#3c3c3c;transform:scaleX(0.900);transform-origin:right center;-webkit-text-stroke:0.14px #3c3c3c;">1,056,434</span>
<span style="left:665.59px;top:177.00px;font-size:8.8px;line-height:8.8px;color:#3c3c3c;transform:scaleX(0.901);transform-origin:right center;-webkit-text-stroke:0.14px #3c3c3c;">986,226</span>
<span style="left:710.59px;top:177.00px;font-size:8.8px;line-height:8.8px;color:#3c3c3c;transform:scaleX(0.901);transform-origin:right center;-webkit-text-stroke:0.14px #3c3c3c;">892,347</span>
<span style="left:755.59px;top:177.00px;font-size:8.8px;line-height:8.8px;color:#3c3c3c;transform:scaleX(0.901);transform-origin:right center;-webkit-text-stroke:0.14px #3c3c3c;">730,880</span>
<span style="left:803.46px;top:177.00px;font-size:8.8px;line-height:8.8px;color:#3c3c3c;transform:scaleX(0.900);transform-origin:right center;-webkit-text-stroke:0.14px #3c3c3c;">7,562,564</span>
<span style="left:185.00px;top:189.00px;font-size:8.8px;line-height:8.8px;color:#3c3c3c;transform:scaleX(0.932);transform-origin:left center;-webkit-text-stroke:0.14px #3c3c3c;">40020</span>
<span style="left:219.80px;top:189.00px;font-size:8.8px;line-height:8.8px;color:#3c3c3c;transform:scaleX(0.860);transform-origin:left center;-webkit-text-stroke:0.14px #3c3c3c;">Services Revenue</span>
<span style="left:395.59px;top:189.00px;font-size:8.8px;line-height:8.8px;color:#3c3c3c;transform:scaleX(0.901);transform-origin:right center;-webkit-text-stroke:0.14px #3c3c3c;">450,808</span>
<span style="left:440.59px;top:189.00px;font-size:8.8px;line-height:8.8px;color:#3c3c3c;transform:scaleX(0.901);transform-origin:right center;-webkit-text-stroke:0.14px #3c3c3c;">382,793</span>
<span style="left:485.59px;top:189.00px;font-size:8.8px;line-height:8.8px;color:#3c3c3c;transform:scaleX(0.901);transform-origin:right center;-webkit-text-stroke:0.14px #3c3c3c;">417,447</span>
<span style="left:530.59px;top:189.00px;font-size:8.8px;line-height:8.8px;color:#3c3c3c;transform:scaleX(0.901);transform-origin:right center;-webkit-text-stroke:0.14px #3c3c3c;">367,154</span>
<span style="left:575.59px;top:189.00px;font-size:8.8px;line-height:8.8px;color:#3c3c3c;transform:scaleX(0.901);transform-origin:right center;-webkit-text-stroke:0.14px #3c3c3c;">380,392</span>
<span style="left:620.59px;top:189.00px;font-size:8.8px;line-height:8.8px;color:#3c3c3c;transform:scaleX(0.901);transform-origin:right center;-webkit-text-stroke:0.14px #3c3c3c;">506,989</span>
<span style="left:665.59px;top:189.00px;font-size:8.8px;line-height:8.8px;color:#3c3c3c;transform:scaleX(0.901);transform-origin:right center;-webkit-text-stroke:0.14px #3c3c3c;">490,540</span>
<span style="left:710.59px;top:189.00px;font-size:8.8px;line-height:8.8px;color:#3c3c3c;transform:scaleX(0.901);transform-origin:right center;-webkit-text-stroke:0.14px #3c3c3c;">559,682</span>
<span style="left:755.59px;top:189.00px;font-size:8.8px;line-height:8.8px;color:#3c3c3c;transform:scaleX(0.901);transform-origin:right center;-webkit-text-stroke:0.14px #3c3c3c;">540,925</span>
<span style="left:803.46px;top:189.00px;font-size:8.8px;line-height:8.8px;color:#3c3c3c;transform:scaleX(0.900);transform-origin:right center;-webkit-text-stroke:0.14px #3c3c3c;">4,096,731</span>
<span style="left:185.00px;top:201.00px;font-size:8.8px;line-height:8.8px;color:#3c3c3c;transform:scaleX(0.932);transform-origin:left center;-webkit-text-stroke:0.14px #3c3c3c;">40030</span>
<span style="left:219.80px;top:201.00px;font-size:8.8px;line-height:8.8px;color:#3c3c3c;transform:scaleX(0.904);transform-origin:left center;-webkit-text-stroke:0.14px #3c3c3c;">Maintenance Revenue</span>
<span style="left:400.49px;top:201.00px;font-size:8.8px;line-height:8.8px;color:#3c3c3c;transform:scaleX(0.901);transform-origin:right center;-webkit-text-stroke:0.14px #3c3c3c;">75,856</span>
<span style="left:445.49px;top:201.00px;font-size:8.8px;line-height:8.8px;color:#3c3c3c;transform:scaleX(0.901);transform-origin:right center;-webkit-text-stroke:0.14px #3c3c3c;">84,414</span>
<span style="left:490.49px;top:201.00px;font-size:8.8px;line-height:8.8px;color:#3c3c3c;transform:scaleX(0.901);transform-origin:right center;-webkit-text-stroke:0.14px #3c3c3c;">79,133</span>
<span style="left:535.49px;top:201.00px;font-size:8.8px;line-height:8.8px;color:#3c3c3c;transform:scaleX(0.901);transform-origin:right center;-webkit-text-stroke:0.14px #3c3c3c;">76,916</span>
<span style="left:580.49px;top:201.00px;font-size:8.8px;line-height:8.8px;color:#3c3c3c;transform:scaleX(0.901);transform-origin:right center;-webkit-text-stroke:0.14px #3c3c3c;">70,032</span>
<span style="left:620.59px;top:201.00px;font-size:8.8px;line-height:8.8px;color:#3c3c3c;transform:scaleX(0.901);transform-origin:right center;-webkit-text-stroke:0.14px #3c3c3c;">102,926</span>
<span style="left:670.49px;top:201.00px;font-size:8.8px;line-height:8.8px;color:#3c3c3c;transform:scaleX(0.901);transform-origin:right center;-webkit-text-stroke:0.14px #3c3c3c;">98,778</span>
<span style="left:715.49px;top:201.00px;font-size:8.8px;line-height:8.8px;color:#3c3c3c;transform:scaleX(0.901);transform-origin:right center;-webkit-text-stroke:0.14px #3c3c3c;">98,099</span>
<span style="left:760.49px;top:201.00px;font-size:8.8px;line-height:8.8px;color:#3c3c3c;transform:scaleX(0.901);transform-origin:right center;-webkit-text-stroke:0.14px #3c3c3c;">59,664</span>
<span style="left:810.79px;top:201.00px;font-size:8.8px;line-height:8.8px;color:#3c3c3c;transform:scaleX(0.901);transform-origin:right center;-webkit-text-stroke:0.14px #3c3c3c;">745,818</span>
<span style="left:185.00px;top:213.00px;font-size:8.8px;line-height:8.8px;color:#3c3c3c;transform:scaleX(0.932);transform-origin:left center;-webkit-text-stroke:0.14px #3c3c3c;">40040</span>
<span style="left:219.80px;top:213.00px;font-size:8.8px;line-height:8.8px;color:#3c3c3c;transform:scaleX(0.895);transform-origin:left center;-webkit-text-stroke:0.14px #3c3c3c;">Other Revenue</span>
<span style="left:400.49px;top:213.00px;font-size:8.8px;line-height:8.8px;color:#3c3c3c;transform:scaleX(0.901);transform-origin:right center;-webkit-text-stroke:0.14px #3c3c3c;">42,274</span>
<span style="left:445.49px;top:213.00px;font-size:8.8px;line-height:8.8px;color:#3c3c3c;transform:scaleX(0.901);transform-origin:right center;-webkit-text-stroke:0.14px #3c3c3c;">35,501</span>
<span style="left:490.49px;top:213.00px;font-size:8.8px;line-height:8.8px;color:#3c3c3c;transform:scaleX(0.901);transform-origin:right center;-webkit-text-stroke:0.14px #3c3c3c;">38,304</span>
<span style="left:535.49px;top:213.00px;font-size:8.8px;line-height:8.8px;color:#3c3c3c;transform:scaleX(0.901);transform-origin:right center;-webkit-text-stroke:0.14px #3c3c3c;">35,894</span>
<span style="left:580.49px;top:213.00px;font-size:8.8px;line-height:8.8px;color:#3c3c3c;transform:scaleX(0.901);transform-origin:right center;-webkit-text-stroke:0.14px #3c3c3c;">32,725</span>
<span style="left:625.49px;top:213.00px;font-size:8.8px;line-height:8.8px;color:#3c3c3c;transform:scaleX(0.901);transform-origin:right center;-webkit-text-stroke:0.14px #3c3c3c;">44,601</span>
<span style="left:670.49px;top:213.00px;font-size:8.8px;line-height:8.8px;color:#3c3c3c;transform:scaleX(0.901);transform-origin:right center;-webkit-text-stroke:0.14px #3c3c3c;">52,294</span>
<span style="left:715.49px;top:213.00px;font-size:8.8px;line-height:8.8px;color:#3c3c3c;transform:scaleX(0.901);transform-origin:right center;-webkit-text-stroke:0.14px #3c3c3c;">50,521</span>
<span style="left:760.49px;top:213.00px;font-size:8.8px;line-height:8.8px;color:#3c3c3c;transform:scaleX(0.901);transform-origin:right center;-webkit-text-stroke:0.14px #3c3c3c;">31,677</span>
<span style="left:810.79px;top:213.00px;font-size:8.8px;line-height:8.8px;color:#3c3c3c;transform:scaleX(0.901);transform-origin:right center;-webkit-text-stroke:0.14px #3c3c3c;">363,792</span>
<span style="left:219.80px;top:227.00px;font-size:8.8px;line-height:8.8px;color:#1c1c1c;font-weight:700;transform:scaleX(0.861);transform-origin:left center;-webkit-text-stroke:0.16px #1c1c1c;">Total Revenue</span>
<span style="left:388.26px;top:227.00px;font-size:8.8px;line-height:8.8px;color:#1c1c1c;font-weight:700;transform:scaleX(0.912);transform-origin:right center;-webkit-text-stroke:0.16px #1c1c1c;">1,412,700</span>
<span style="left:433.26px;top:227.00px;font-size:8.8px;line-height:8.8px;color:#1c1c1c;font-weight:700;transform:scaleX(0.912);transform-origin:right center;-webkit-text-stroke:0.16px #1c1c1c;">1,290,538</span>
<span style="left:478.26px;top:227.00px;font-size:8.8px;line-height:8.8px;color:#1c1c1c;font-weight:700;transform:scaleX(0.912);transform-origin:right center;-webkit-text-stroke:0.16px #1c1c1c;">1,317,295</span>
<span style="left:523.26px;top:227.00px;font-size:8.8px;line-height:8.8px;color:#1c1c1c;font-weight:700;transform:scaleX(0.912);transform-origin:right center;-webkit-text-stroke:0.16px #1c1c1c;">1,276,677</span>
<span style="left:569.23px;top:227.00px;font-size:8.8px;line-height:8.8px;color:#1c1c1c;font-weight:700;transform:scaleX(0.935);transform-origin:right center;-webkit-text-stroke:0.16px #1c1c1c;">1,169,111</span>
<span style="left:613.26px;top:227.00px;font-size:8.8px;line-height:8.8px;color:#1c1c1c;font-weight:700;transform:scaleX(0.912);transform-origin:right center;-webkit-text-stroke:0.16px #1c1c1c;">1,710,950</span>
<span style="left:658.26px;top:227.00px;font-size:8.8px;line-height:8.8px;color:#1c1c1c;font-weight:700;transform:scaleX(0.912);transform-origin:right center;-webkit-text-stroke:0.16px #1c1c1c;">1,627,837</span>
<span style="left:703.26px;top:227.00px;font-size:8.8px;line-height:8.8px;color:#1c1c1c;font-weight:700;transform:scaleX(0.912);transform-origin:right center;-webkit-text-stroke:0.16px #1c1c1c;">1,600,649</span>
<span style="left:748.26px;top:227.00px;font-size:8.8px;line-height:8.8px;color:#1c1c1c;font-weight:700;transform:scaleX(0.912);transform-origin:right center;-webkit-text-stroke:0.16px #1c1c1c;">1,363,145</span>
<span style="left:798.57px;top:227.00px;font-size:8.8px;line-height:8.8px;color:#1c1c1c;font-weight:700;transform:scaleX(0.911);transform-origin:right center;-webkit-text-stroke:0.16px #1c1c1c;">12,768,904</span>
<span style="left:174.80px;top:246.00px;font-size:8.8px;line-height:8.8px;color:#1c1c1c;font-weight:700;transform:scaleX(0.818);transform-origin:left center;-webkit-text-stroke:0.16px #1c1c1c;">Cost of Sales</span>
<span style="left:185.00px;top:258.00px;font-size:8.8px;line-height:8.8px;color:#3c3c3c;transform:scaleX(0.932);transform-origin:left center;-webkit-text-stroke:0.14px #3c3c3c;">50010</span>
<span style="left:219.80px;top:258.00px;font-size:8.8px;line-height:8.8px;color:#3c3c3c;transform:scaleX(0.845);transform-origin:left center;-webkit-text-stroke:0.14px #3c3c3c;">COGS - Product Sales</span>
<span style="left:395.59px;top:258.00px;font-size:8.8px;line-height:8.8px;color:#3c3c3c;transform:scaleX(0.901);transform-origin:right center;-webkit-text-stroke:0.14px #3c3c3c;">281,476</span>
<span style="left:440.59px;top:258.00px;font-size:8.8px;line-height:8.8px;color:#3c3c3c;transform:scaleX(0.901);transform-origin:right center;-webkit-text-stroke:0.14px #3c3c3c;">245,562</span>
<span style="left:485.59px;top:258.00px;font-size:8.8px;line-height:8.8px;color:#3c3c3c;transform:scaleX(0.901);transform-origin:right center;-webkit-text-stroke:0.14px #3c3c3c;">270,768</span>
<span style="left:530.59px;top:258.00px;font-size:8.8px;line-height:8.8px;color:#3c3c3c;transform:scaleX(0.901);transform-origin:right center;-webkit-text-stroke:0.14px #3c3c3c;">258,414</span>
<span style="left:575.59px;top:258.00px;font-size:8.8px;line-height:8.8px;color:#3c3c3c;transform:scaleX(0.901);transform-origin:right center;-webkit-text-stroke:0.14px #3c3c3c;">235,415</span>
<span style="left:620.59px;top:258.00px;font-size:8.8px;line-height:8.8px;color:#3c3c3c;transform:scaleX(0.901);transform-origin:right center;-webkit-text-stroke:0.14px #3c3c3c;">342,409</span>
<span style="left:665.59px;top:258.00px;font-size:8.8px;line-height:8.8px;color:#3c3c3c;transform:scaleX(0.901);transform-origin:right center;-webkit-text-stroke:0.14px #3c3c3c;">328,226</span>
<span style="left:710.59px;top:258.00px;font-size:8.8px;line-height:8.8px;color:#3c3c3c;transform:scaleX(0.901);transform-origin:right center;-webkit-text-stroke:0.14px #3c3c3c;">346,062</span>
<span style="left:755.59px;top:258.00px;font-size:8.8px;line-height:8.8px;color:#3c3c3c;transform:scaleX(0.901);transform-origin:right center;-webkit-text-stroke:0.14px #3c3c3c;">254,515</span>
<span style="left:803.46px;top:258.00px;font-size:8.8px;line-height:8.8px;color:#3c3c3c;transform:scaleX(0.900);transform-origin:right center;-webkit-text-stroke:0.14px #3c3c3c;">2,562,847</span>
<span style="left:219.80px;top:273.00px;font-size:8.8px;line-height:8.8px;color:#1c1c1c;font-weight:700;transform:scaleX(0.818);transform-origin:left center;-webkit-text-stroke:0.16px #1c1c1c;">Cost of Sales</span>
<span style="left:395.59px;top:273.00px;font-size:8.8px;line-height:8.8px;color:#1c1c1c;font-weight:700;transform:scaleX(0.910);transform-origin:right center;-webkit-text-stroke:0.16px #1c1c1c;">281,476</span>
<span style="left:440.59px;top:273.00px;font-size:8.8px;line-height:8.8px;color:#1c1c1c;font-weight:700;transform:scaleX(0.910);transform-origin:right center;-webkit-text-stroke:0.16px #1c1c1c;">245,562</span>
<span style="left:485.59px;top:273.00px;font-size:8.8px;line-height:8.8px;color:#1c1c1c;font-weight:700;transform:scaleX(0.910);transform-origin:right center;-webkit-text-stroke:0.16px #1c1c1c;">270,768</span>
<span style="left:530.59px;top:273.00px;font-size:8.8px;line-height:8.8px;color:#1c1c1c;font-weight:700;transform:scaleX(0.910);transform-origin:right center;-webkit-text-stroke:0.16px #1c1c1c;">258,414</span>
<span style="left:575.59px;top:273.00px;font-size:8.8px;line-height:8.8px;color:#1c1c1c;font-weight:700;transform:scaleX(0.910);transform-origin:right center;-webkit-text-stroke:0.16px #1c1c1c;">235,415</span>
<span style="left:620.59px;top:273.00px;font-size:8.8px;line-height:8.8px;color:#1c1c1c;font-weight:700;transform:scaleX(0.910);transform-origin:right center;-webkit-text-stroke:0.16px #1c1c1c;">342,409</span>
<span style="left:665.59px;top:273.00px;font-size:8.8px;line-height:8.8px;color:#1c1c1c;font-weight:700;transform:scaleX(0.910);transform-origin:right center;-webkit-text-stroke:0.16px #1c1c1c;">328,226</span>
<span style="left:710.59px;top:273.00px;font-size:8.8px;line-height:8.8px;color:#1c1c1c;font-weight:700;transform:scaleX(0.910);transform-origin:right center;-webkit-text-stroke:0.16px #1c1c1c;">346,062</span>
<span style="left:755.59px;top:273.00px;font-size:8.8px;line-height:8.8px;color:#1c1c1c;font-weight:700;transform:scaleX(0.910);transform-origin:right center;-webkit-text-stroke:0.16px #1c1c1c;">254,515</span>
<span style="left:803.46px;top:273.00px;font-size:8.8px;line-height:8.8px;color:#1c1c1c;font-weight:700;transform:scaleX(0.912);transform-origin:right center;-webkit-text-stroke:0.16px #1c1c1c;">2,562,847</span>
<span style="left:174.80px;top:292.00px;font-size:8.8px;line-height:8.8px;color:#1c1c1c;font-weight:700;transform:scaleX(0.830);transform-origin:left center;-webkit-text-stroke:0.16px #1c1c1c;">Gross Profit</span>
<span style="left:388.26px;top:292.00px;font-size:8.8px;line-height:8.8px;color:#1c1c1c;font-weight:700;transform:scaleX(0.912);transform-origin:right center;-webkit-text-stroke:0.16px #1c1c1c;">1,131,224</span>
<span style="left:433.26px;top:292.00px;font-size:8.8px;line-height:8.8px;color:#1c1c1c;font-weight:700;transform:scaleX(0.912);transform-origin:right center;-webkit-text-stroke:0.16px #1c1c1c;">1,044,976</span>
<span style="left:478.26px;top:292.00px;font-size:8.8px;line-height:8.8px;color:#1c1c1c;font-weight:700;transform:scaleX(0.912);transform-origin:right center;-webkit-text-stroke:0.16px #1c1c1c;">1,046,527</span>
<span style="left:523.26px;top:292.00px;font-size:8.8px;line-height:8.8px;color:#1c1c1c;font-weight:700;transform:scaleX(0.912);transform-origin:right center;-webkit-text-stroke:0.16px #1c1c1c;">1,018,263</span>
<span style="left:575.59px;top:292.00px;font-size:8.8px;line-height:8.8px;color:#1c1c1c;font-weight:700;transform:scaleX(0.910);transform-origin:right center;-webkit-text-stroke:0.16px #1c1c1c;">933,696</span>
<span style="left:613.26px;top:292.00px;font-size:8.8px;line-height:8.8px;color:#1c1c1c;font-weight:700;transform:scaleX(0.912);transform-origin:right center;-webkit-text-stroke:0.16px #1c1c1c;">1,368,542</span>
<span style="left:658.26px;top:292.00px;font-size:8.8px;line-height:8.8px;color:#1c1c1c;font-weight:700;transform:scaleX(0.912);transform-origin:right center;-webkit-text-stroke:0.16px #1c1c1c;">1,299,612</span>
<span style="left:703.26px;top:292.00px;font-size:8.8px;line-height:8.8px;color:#1c1c1c;font-weight:700;transform:scaleX(0.912);transform-origin:right center;-webkit-text-stroke:0.16px #1c1c1c;">1,254,588</span>
<span style="left:748.26px;top:292.00px;font-size:8.8px;line-height:8.8px;color:#1c1c1c;font-weight:700;transform:scaleX(0.912);transform-origin:right center;-webkit-text-stroke:0.16px #1c1c1c;">1,108,630</span>
<span style="left:798.57px;top:292.00px;font-size:8.8px;line-height:8.8px;color:#1c1c1c;font-weight:700;transform:scaleX(0.911);transform-origin:right center;-webkit-text-stroke:0.16px #1c1c1c;">10,206,057</span>
<span style="left:174.80px;top:305.00px;font-size:8.8px;line-height:8.8px;color:#1c1c1c;font-weight:700;transform:scaleX(0.860);transform-origin:left center;-webkit-text-stroke:0.16px #1c1c1c;">Gross Profit Margin</span>
<span style="left:402.45px;top:305.00px;font-size:8.8px;line-height:8.8px;color:#1c1c1c;font-weight:700;transform:scaleX(0.890);transform-origin:right center;-webkit-text-stroke:0.16px #1c1c1c;">80.1%</span>
<span style="left:447.45px;top:305.00px;font-size:8.8px;line-height:8.8px;color:#1c1c1c;font-weight:700;transform:scaleX(0.890);transform-origin:right center;-webkit-text-stroke:0.16px #1c1c1c;">81.0%</span>
<span style="left:492.45px;top:305.00px;font-size:8.8px;line-height:8.8px;color:#1c1c1c;font-weight:700;transform:scaleX(0.890);transform-origin:right center;-webkit-text-stroke:0.16px #1c1c1c;">79.4%</span>
<span style="left:537.45px;top:305.00px;font-size:8.8px;line-height:8.8px;color:#1c1c1c;font-weight:700;transform:scaleX(0.890);transform-origin:right center;-webkit-text-stroke:0.16px #1c1c1c;">79.8%</span>
<span style="left:582.45px;top:305.00px;font-size:8.8px;line-height:8.8px;color:#1c1c1c;font-weight:700;transform:scaleX(0.890);transform-origin:right center;-webkit-text-stroke:0.16px #1c1c1c;">79.9%</span>
<span style="left:627.45px;top:305.00px;font-size:8.8px;line-height:8.8px;color:#1c1c1c;font-weight:700;transform:scaleX(0.890);transform-origin:right center;-webkit-text-stroke:0.16px #1c1c1c;">80.0%</span>
<span style="left:672.45px;top:305.00px;font-size:8.8px;line-height:8.8px;color:#1c1c1c;font-weight:700;transform:scaleX(0.890);transform-origin:right center;-webkit-text-stroke:0.16px #1c1c1c;">79.8%</span>
<span style="left:717.45px;top:305.00px;font-size:8.8px;line-height:8.8px;color:#1c1c1c;font-weight:700;transform:scaleX(0.890);transform-origin:right center;-webkit-text-stroke:0.16px #1c1c1c;">78.4%</span>
<span style="left:762.45px;top:305.00px;font-size:8.8px;line-height:8.8px;color:#1c1c1c;font-weight:700;transform:scaleX(0.890);transform-origin:right center;-webkit-text-stroke:0.16px #1c1c1c;">81.3%</span>
<span style="left:817.65px;top:305.00px;font-size:8.8px;line-height:8.8px;color:#1c1c1c;font-weight:700;transform:scaleX(0.890);transform-origin:right center;-webkit-text-stroke:0.16px #1c1c1c;">79.9%</span>
<span style="left:174.80px;top:324.00px;font-size:8.8px;line-height:8.8px;color:#1c1c1c;font-weight:700;transform:scaleX(0.862);transform-origin:left center;-webkit-text-stroke:0.16px #1c1c1c;">Departmental Expenses</span>
<span style="left:174.80px;top:336.00px;font-size:8.8px;line-height:8.8px;color:#5288d2;font-weight:700;font-style:italic;transform:scaleX(0.880);transform-origin:left center;-webkit-text-stroke:0.05px #5288d2;">Administration</span>
<span style="left:174.80px;top:348.00px;font-size:8.8px;line-height:8.8px;color:#3c3c3c;transform:scaleX(0.890);transform-origin:left center;-webkit-text-stroke:0.14px #3c3c3c;">Salaries and Benefits</span>
<span style="left:395.59px;top:348.00px;font-size:8.8px;line-height:8.8px;color:#3c3c3c;transform:scaleX(0.901);transform-origin:right center;-webkit-text-stroke:0.14px #3c3c3c;">140,334</span>
<span style="left:440.59px;top:348.00px;font-size:8.8px;line-height:8.8px;color:#3c3c3c;transform:scaleX(0.901);transform-origin:right center;-webkit-text-stroke:0.14px #3c3c3c;">130,452</span>
<span style="left:485.59px;top:348.00px;font-size:8.8px;line-height:8.8px;color:#3c3c3c;transform:scaleX(0.901);transform-origin:right center;-webkit-text-stroke:0.14px #3c3c3c;">137,674</span>
<span style="left:531.24px;top:348.00px;font-size:8.8px;line-height:8.8px;color:#3c3c3c;transform:scaleX(0.920);transform-origin:right center;-webkit-text-stroke:0.14px #3c3c3c;">116,210</span>
<span style="left:576.24px;top:348.00px;font-size:8.8px;line-height:8.8px;color:#3c3c3c;transform:scaleX(0.920);transform-origin:right center;-webkit-text-stroke:0.14px #3c3c3c;">113,588</span>
<span style="left:620.59px;top:348.00px;font-size:8.8px;line-height:8.8px;color:#3c3c3c;transform:scaleX(0.901);transform-origin:right center;-webkit-text-stroke:0.14px #3c3c3c;">160,148</span>
<span style="left:665.59px;top:348.00px;font-size:8.8px;line-height:8.8px;color:#3c3c3c;transform:scaleX(0.901);transform-origin:right center;-webkit-text-stroke:0.14px #3c3c3c;">153,858</span>
<span style="left:710.59px;top:348.00px;font-size:8.8px;line-height:8.8px;color:#3c3c3c;transform:scaleX(0.901);transform-origin:right center;-webkit-text-stroke:0.14px #3c3c3c;">156,931</span>
<span style="left:755.59px;top:348.00px;font-size:8.8px;line-height:8.8px;color:#3c3c3c;transform:scaleX(0.901);transform-origin:right center;-webkit-text-stroke:0.14px #3c3c3c;">124,724</span>
<span style="left:803.46px;top:348.00px;font-size:8.8px;line-height:8.8px;color:#3c3c3c;transform:scaleX(0.900);transform-origin:right center;-webkit-text-stroke:0.14px #3c3c3c;">1,233,920</span>
<span style="left:174.80px;top:360.00px;font-size:8.8px;line-height:8.8px;color:#3c3c3c;transform:scaleX(0.893);transform-origin:left center;-webkit-text-stroke:0.14px #3c3c3c;">Sales and Marketing</span>
<span style="left:395.59px;top:360.00px;font-size:8.8px;line-height:8.8px;color:#3c3c3c;transform:scaleX(0.901);transform-origin:right center;-webkit-text-stroke:0.14px #3c3c3c;">169,482</span>
<span style="left:440.59px;top:360.00px;font-size:8.8px;line-height:8.8px;color:#3c3c3c;transform:scaleX(0.901);transform-origin:right center;-webkit-text-stroke:0.14px #3c3c3c;">162,936</span>
<span style="left:485.59px;top:360.00px;font-size:8.8px;line-height:8.8px;color:#3c3c3c;transform:scaleX(0.901);transform-origin:right center;-webkit-text-stroke:0.14px #3c3c3c;">159,389</span>
<span style="left:530.59px;top:360.00px;font-size:8.8px;line-height:8.8px;color:#3c3c3c;transform:scaleX(0.901);transform-origin:right center;-webkit-text-stroke:0.14px #3c3c3c;">151,361</span>
<span style="left:575.59px;top:360.00px;font-size:8.8px;line-height:8.8px;color:#3c3c3c;transform:scaleX(0.901);transform-origin:right center;-webkit-text-stroke:0.14px #3c3c3c;">125,137</span>
<span style="left:620.59px;top:360.00px;font-size:8.8px;line-height:8.8px;color:#3c3c3c;transform:scaleX(0.901);transform-origin:right center;-webkit-text-stroke:0.14px #3c3c3c;">196,820</span>
<span style="left:665.59px;top:360.00px;font-size:8.8px;line-height:8.8px;color:#3c3c3c;transform:scaleX(0.901);transform-origin:right center;-webkit-text-stroke:0.14px #3c3c3c;">196,434</span>
<span style="left:710.59px;top:360.00px;font-size:8.8px;line-height:8.8px;color:#3c3c3c;transform:scaleX(0.901);transform-origin:right center;-webkit-text-stroke:0.14px #3c3c3c;">195,153</span>
<span style="left:755.59px;top:360.00px;font-size:8.8px;line-height:8.8px;color:#3c3c3c;transform:scaleX(0.901);transform-origin:right center;-webkit-text-stroke:0.14px #3c3c3c;">163,827</span>
<span style="left:803.46px;top:360.00px;font-size:8.8px;line-height:8.8px;color:#3c3c3c;transform:scaleX(0.900);transform-origin:right center;-webkit-text-stroke:0.14px #3c3c3c;">1,520,538</span>
<span style="left:174.80px;top:372.00px;font-size:8.8px;line-height:8.8px;color:#3c3c3c;transform:scaleX(0.910);transform-origin:left center;-webkit-text-stroke:0.14px #3c3c3c;">Travel and Entertainment</span>
<span style="left:412.71px;top:372.00px;font-size:8.8px;line-height:8.8px;color:#3c3c3c;transform:scaleX(0.903);transform-origin:right center;-webkit-text-stroke:0.14px #3c3c3c;">977</span>
<span style="left:457.71px;top:372.00px;font-size:8.8px;line-height:8.8px;color:#3c3c3c;transform:scaleX(0.903);transform-origin:right center;-webkit-text-stroke:0.14px #3c3c3c;">908</span>
<span style="left:502.71px;top:372.00px;font-size:8.8px;line-height:8.8px;color:#3c3c3c;transform:scaleX(0.903);transform-origin:right center;-webkit-text-stroke:0.14px #3c3c3c;">995</span>
<span style="left:547.71px;top:372.00px;font-size:8.8px;line-height:8.8px;color:#3c3c3c;transform:scaleX(0.903);transform-origin:right center;-webkit-text-stroke:0.14px #3c3c3c;">908</span>
<span style="left:592.71px;top:372.00px;font-size:8.8px;line-height:8.8px;color:#3c3c3c;transform:scaleX(0.903);transform-origin:right center;-webkit-text-stroke:0.14px #3c3c3c;">781</span>
<span style="left:630.38px;top:372.00px;font-size:8.8px;line-height:8.8px;color:#3c3c3c;transform:scaleX(0.901);transform-origin:right center;-webkit-text-stroke:0.14px #3c3c3c;">1,313</span>
<span style="left:675.38px;top:372.00px;font-size:8.8px;line-height:8.8px;color:#3c3c3c;transform:scaleX(0.901);transform-origin:right center;-webkit-text-stroke:0.14px #3c3c3c;">1,176</span>
<span style="left:720.38px;top:372.00px;font-size:8.8px;line-height:8.8px;color:#3c3c3c;transform:scaleX(0.901);transform-origin:right center;-webkit-text-stroke:0.14px #3c3c3c;">1,189</span>
<span style="left:765.38px;top:372.00px;font-size:8.8px;line-height:8.8px;color:#3c3c3c;transform:scaleX(0.901);transform-origin:right center;-webkit-text-stroke:0.14px #3c3c3c;">1,108</span>
<span style="left:820.58px;top:372.00px;font-size:8.8px;line-height:8.8px;color:#3c3c3c;transform:scaleX(0.901);transform-origin:right center;-webkit-text-stroke:0.14px #3c3c3c;">9,353</span>
<span style="left:174.80px;top:384.00px;font-size:8.8px;line-height:8.8px;color:#3c3c3c;transform:scaleX(0.863);transform-origin:left center;-webkit-text-stroke:0.14px #3c3c3c;">Professional Fees</span>
<span style="left:405.38px;top:384.00px;font-size:8.8px;line-height:8.8px;color:#3c3c3c;transform:scaleX(0.901);transform-origin:right center;-webkit-text-stroke:0.14px #3c3c3c;">7,216</span>
<span style="left:450.38px;top:384.00px;font-size:8.8px;line-height:8.8px;color:#3c3c3c;transform:scaleX(0.901);transform-origin:right center;-webkit-text-stroke:0.14px #3c3c3c;">7,738</span>
<span style="left:495.38px;top:384.00px;font-size:8.8px;line-height:8.8px;color:#3c3c3c;transform:scaleX(0.901);transform-origin:right center;-webkit-text-stroke:0.14px #3c3c3c;">8,015</span>
<span style="left:540.38px;top:384.00px;font-size:8.8px;line-height:8.8px;color:#3c3c3c;transform:scaleX(0.901);transform-origin:right center;-webkit-text-stroke:0.14px #3c3c3c;">6,803</span>
<span style="left:585.38px;top:384.00px;font-size:8.8px;line-height:8.8px;color:#3c3c3c;transform:scaleX(0.901);transform-origin:right center;-webkit-text-stroke:0.14px #3c3c3c;">5,912</span>
<span style="left:630.38px;top:384.00px;font-size:8.8px;line-height:8.8px;color:#3c3c3c;transform:scaleX(0.901);transform-origin:right center;-webkit-text-stroke:0.14px #3c3c3c;">9,852</span>
<span style="left:675.38px;top:384.00px;font-size:8.8px;line-height:8.8px;color:#3c3c3c;transform:scaleX(0.901);transform-origin:right center;-webkit-text-stroke:0.14px #3c3c3c;">8,696</span>
<span style="left:720.38px;top:384.00px;font-size:8.8px;line-height:8.8px;color:#3c3c3c;transform:scaleX(0.901);transform-origin:right center;-webkit-text-stroke:0.14px #3c3c3c;">9,228</span>
<span style="left:765.38px;top:384.00px;font-size:8.8px;line-height:8.8px;color:#3c3c3c;transform:scaleX(0.901);transform-origin:right center;-webkit-text-stroke:0.14px #3c3c3c;">6,949</span>
<span style="left:815.69px;top:384.00px;font-size:8.8px;line-height:8.8px;color:#3c3c3c;transform:scaleX(0.901);transform-origin:right center;-webkit-text-stroke:0.14px #3c3c3c;">70,409</span>
<span style="left:174.80px;top:396.00px;font-size:8.8px;line-height:8.8px;color:#3c3c3c;transform:scaleX(0.883);transform-origin:left center;-webkit-text-stroke:0.14px #3c3c3c;">Bad Debt</span>
<span style="left:417.60px;top:396.00px;font-size:8.8px;line-height:8.8px;color:#3c3c3c;transform:scaleX(0.902);transform-origin:right center;-webkit-text-stroke:0.14px #3c3c3c;">33</span>
<span style="left:462.60px;top:396.00px;font-size:8.8px;line-height:8.8px;color:#3c3c3c;transform:scaleX(0.902);transform-origin:right center;-webkit-text-stroke:0.14px #3c3c3c;">38</span>
<span style="left:507.60px;top:396.00px;font-size:8.8px;line-height:8.8px;color:#3c3c3c;transform:scaleX(0.902);transform-origin:right center;-webkit-text-stroke:0.14px #3c3c3c;">41</span>
<span style="left:552.60px;top:396.00px;font-size:8.8px;line-height:8.8px;color:#3c3c3c;transform:scaleX(0.902);transform-origin:right center;-webkit-text-stroke:0.14px #3c3c3c;">36</span>
<span style="left:597.60px;top:396.00px;font-size:8.8px;line-height:8.8px;color:#3c3c3c;transform:scaleX(0.902);transform-origin:right center;-webkit-text-stroke:0.14px #3c3c3c;">30</span>
<span style="left:642.60px;top:396.00px;font-size:8.8px;line-height:8.8px;color:#3c3c3c;transform:scaleX(0.902);transform-origin:right center;-webkit-text-stroke:0.14px #3c3c3c;">47</span>
<span style="left:687.60px;top:396.00px;font-size:8.8px;line-height:8.8px;color:#3c3c3c;transform:scaleX(0.902);transform-origin:right center;-webkit-text-stroke:0.14px #3c3c3c;">44</span>
<span style="left:732.60px;top:396.00px;font-size:8.8px;line-height:8.8px;color:#3c3c3c;transform:scaleX(0.902);transform-origin:right center;-webkit-text-stroke:0.14px #3c3c3c;">44</span>
<span style="left:777.60px;top:396.00px;font-size:8.8px;line-height:8.8px;color:#3c3c3c;transform:scaleX(0.902);transform-origin:right center;-webkit-text-stroke:0.14px #3c3c3c;">36</span>
<span style="left:827.91px;top:396.00px;font-size:8.8px;line-height:8.8px;color:#3c3c3c;transform:scaleX(0.903);transform-origin:right center;-webkit-text-stroke:0.14px #3c3c3c;">350</span>
<span style="left:174.80px;top:408.00px;font-size:8.8px;line-height:8.8px;color:#3c3c3c;transform:scaleX(0.873);transform-origin:left center;-webkit-text-stroke:0.14px #3c3c3c;">Business Insurance</span>
<span style="left:405.38px;top:408.00px;font-size:8.8px;line-height:8.8px;color:#3c3c3c;transform:scaleX(0.901);transform-origin:right center;-webkit-text-stroke:0.14px #3c3c3c;">1,342</span>
<span style="left:450.38px;top:408.00px;font-size:8.8px;line-height:8.8px;color:#3c3c3c;transform:scaleX(0.901);transform-origin:right center;-webkit-text-stroke:0.14px #3c3c3c;">1,514</span>
<span style="left:495.38px;top:408.00px;font-size:8.8px;line-height:8.8px;color:#3c3c3c;transform:scaleX(0.901);transform-origin:right center;-webkit-text-stroke:0.14px #3c3c3c;">1,461</span>
<span style="left:540.38px;top:408.00px;font-size:8.8px;line-height:8.8px;color:#3c3c3c;transform:scaleX(0.901);transform-origin:right center;-webkit-text-stroke:0.14px #3c3c3c;">1,244</span>
<span style="left:585.38px;top:408.00px;font-size:8.8px;line-height:8.8px;color:#3c3c3c;transform:scaleX(0.901);transform-origin:right center;-webkit-text-stroke:0.14px #3c3c3c;">1,317</span>
<span style="left:630.38px;top:408.00px;font-size:8.8px;line-height:8.8px;color:#3c3c3c;transform:scaleX(0.901);transform-origin:right center;-webkit-text-stroke:0.14px #3c3c3c;">1,683</span>
<span style="left:675.38px;top:408.00px;font-size:8.8px;line-height:8.8px;color:#3c3c3c;transform:scaleX(0.901);transform-origin:right center;-webkit-text-stroke:0.14px #3c3c3c;">1,841</span>
<span style="left:720.38px;top:408.00px;font-size:8.8px;line-height:8.8px;color:#3c3c3c;transform:scaleX(0.901);transform-origin:right center;-webkit-text-stroke:0.14px #3c3c3c;">1,666</span>
<span style="left:765.38px;top:408.00px;font-size:8.8px;line-height:8.8px;color:#3c3c3c;transform:scaleX(0.901);transform-origin:right center;-webkit-text-stroke:0.14px #3c3c3c;">1,581</span>
<span style="left:815.69px;top:408.00px;font-size:8.8px;line-height:8.8px;color:#3c3c3c;transform:scaleX(0.901);transform-origin:right center;-webkit-text-stroke:0.14px #3c3c3c;">13,647</span>
<span style="left:174.80px;top:420.00px;font-size:8.8px;line-height:8.8px;color:#3c3c3c;transform:scaleX(0.891);transform-origin:left center;-webkit-text-stroke:0.14px #3c3c3c;">Office Supplies</span>
<span style="left:405.38px;top:420.00px;font-size:8.8px;line-height:8.8px;color:#3c3c3c;transform:scaleX(0.901);transform-origin:right center;-webkit-text-stroke:0.14px #3c3c3c;">1,589</span>
<span style="left:450.38px;top:420.00px;font-size:8.8px;line-height:8.8px;color:#3c3c3c;transform:scaleX(0.901);transform-origin:right center;-webkit-text-stroke:0.14px #3c3c3c;">1,635</span>
<span style="left:495.38px;top:420.00px;font-size:8.8px;line-height:8.8px;color:#3c3c3c;transform:scaleX(0.901);transform-origin:right center;-webkit-text-stroke:0.14px #3c3c3c;">1,533</span>
<span style="left:540.38px;top:420.00px;font-size:8.8px;line-height:8.8px;color:#3c3c3c;transform:scaleX(0.901);transform-origin:right center;-webkit-text-stroke:0.14px #3c3c3c;">1,603</span>
<span style="left:585.38px;top:420.00px;font-size:8.8px;line-height:8.8px;color:#3c3c3c;transform:scaleX(0.901);transform-origin:right center;-webkit-text-stroke:0.14px #3c3c3c;">1,337</span>
<span style="left:630.38px;top:420.00px;font-size:8.8px;line-height:8.8px;color:#3c3c3c;transform:scaleX(0.901);transform-origin:right center;-webkit-text-stroke:0.14px #3c3c3c;">1,937</span>
<span style="left:675.38px;top:420.00px;font-size:8.8px;line-height:8.8px;color:#3c3c3c;transform:scaleX(0.901);transform-origin:right center;-webkit-text-stroke:0.14px #3c3c3c;">1,980</span>
<span style="left:720.38px;top:420.00px;font-size:8.8px;line-height:8.8px;color:#3c3c3c;transform:scaleX(0.901);transform-origin:right center;-webkit-text-stroke:0.14px #3c3c3c;">1,881</span>
<span style="left:766.02px;top:420.00px;font-size:8.8px;line-height:8.8px;color:#3c3c3c;transform:scaleX(0.928);transform-origin:right center;-webkit-text-stroke:0.14px #3c3c3c;">1,711</span>
<span style="left:815.69px;top:420.00px;font-size:8.8px;line-height:8.8px;color:#3c3c3c;transform:scaleX(0.901);transform-origin:right center;-webkit-text-stroke:0.14px #3c3c3c;">15,207</span>
<span style="left:174.80px;top:432.00px;font-size:8.8px;line-height:8.8px;color:#3c3c3c;transform:scaleX(0.922);transform-origin:left center;-webkit-text-stroke:0.14px #3c3c3c;">Telephone and Internet</span>
<span style="left:405.38px;top:432.00px;font-size:8.8px;line-height:8.8px;color:#3c3c3c;transform:scaleX(0.901);transform-origin:right center;-webkit-text-stroke:0.14px #3c3c3c;">4,328</span>
<span style="left:450.38px;top:432.00px;font-size:8.8px;line-height:8.8px;color:#3c3c3c;transform:scaleX(0.901);transform-origin:right center;-webkit-text-stroke:0.14px #3c3c3c;">4,144</span>
<span style="left:495.38px;top:432.00px;font-size:8.8px;line-height:8.8px;color:#3c3c3c;transform:scaleX(0.901);transform-origin:right center;-webkit-text-stroke:0.14px #3c3c3c;">4,104</span>
<span style="left:540.38px;top:432.00px;font-size:8.8px;line-height:8.8px;color:#3c3c3c;transform:scaleX(0.901);transform-origin:right center;-webkit-text-stroke:0.14px #3c3c3c;">3,822</span>
<span style="left:585.38px;top:432.00px;font-size:8.8px;line-height:8.8px;color:#3c3c3c;transform:scaleX(0.901);transform-origin:right center;-webkit-text-stroke:0.14px #3c3c3c;">3,123</span>
<span style="left:630.38px;top:432.00px;font-size:8.8px;line-height:8.8px;color:#3c3c3c;transform:scaleX(0.901);transform-origin:right center;-webkit-text-stroke:0.14px #3c3c3c;">4,841</span>
<span style="left:675.38px;top:432.00px;font-size:8.8px;line-height:8.8px;color:#3c3c3c;transform:scaleX(0.901);transform-origin:right center;-webkit-text-stroke:0.14px #3c3c3c;">4,918</span>
<span style="left:720.38px;top:432.00px;font-size:8.8px;line-height:8.8px;color:#3c3c3c;transform:scaleX(0.901);transform-origin:right center;-webkit-text-stroke:0.14px #3c3c3c;">5,142</span>
<span style="left:765.38px;top:432.00px;font-size:8.8px;line-height:8.8px;color:#3c3c3c;transform:scaleX(0.901);transform-origin:right center;-webkit-text-stroke:0.14px #3c3c3c;">4,065</span>
<span style="left:815.69px;top:432.00px;font-size:8.8px;line-height:8.8px;color:#3c3c3c;transform:scaleX(0.901);transform-origin:right center;-webkit-text-stroke:0.14px #3c3c3c;">38,486</span>
<span style="left:174.80px;top:444.00px;font-size:8.8px;line-height:8.8px;color:#3c3c3c;transform:scaleX(0.911);transform-origin:left center;-webkit-text-stroke:0.14px #3c3c3c;">Rent and Utilities</span>
<span style="left:405.38px;top:444.00px;font-size:8.8px;line-height:8.8px;color:#3c3c3c;transform:scaleX(0.901);transform-origin:right center;-webkit-text-stroke:0.14px #3c3c3c;">3,622</span>
<span style="left:450.38px;top:444.00px;font-size:8.8px;line-height:8.8px;color:#3c3c3c;transform:scaleX(0.901);transform-origin:right center;-webkit-text-stroke:0.14px #3c3c3c;">3,190</span>
<span style="left:495.38px;top:444.00px;font-size:8.8px;line-height:8.8px;color:#3c3c3c;transform:scaleX(0.901);transform-origin:right center;-webkit-text-stroke:0.14px #3c3c3c;">3,637</span>
<span style="left:540.38px;top:444.00px;font-size:8.8px;line-height:8.8px;color:#3c3c3c;transform:scaleX(0.901);transform-origin:right center;-webkit-text-stroke:0.14px #3c3c3c;">3,230</span>
<span style="left:585.38px;top:444.00px;font-size:8.8px;line-height:8.8px;color:#3c3c3c;transform:scaleX(0.901);transform-origin:right center;-webkit-text-stroke:0.14px #3c3c3c;">3,013</span>
<span style="left:630.38px;top:444.00px;font-size:8.8px;line-height:8.8px;color:#3c3c3c;transform:scaleX(0.901);transform-origin:right center;-webkit-text-stroke:0.14px #3c3c3c;">4,025</span>
<span style="left:675.38px;top:444.00px;font-size:8.8px;line-height:8.8px;color:#3c3c3c;transform:scaleX(0.901);transform-origin:right center;-webkit-text-stroke:0.14px #3c3c3c;">4,235</span>
<span style="left:720.38px;top:444.00px;font-size:8.8px;line-height:8.8px;color:#3c3c3c;transform:scaleX(0.901);transform-origin:right center;-webkit-text-stroke:0.14px #3c3c3c;">4,551</span>
<span style="left:765.38px;top:444.00px;font-size:8.8px;line-height:8.8px;color:#3c3c3c;transform:scaleX(0.901);transform-origin:right center;-webkit-text-stroke:0.14px #3c3c3c;">3,563</span>
<span style="left:815.69px;top:444.00px;font-size:8.8px;line-height:8.8px;color:#3c3c3c;transform:scaleX(0.901);transform-origin:right center;-webkit-text-stroke:0.14px #3c3c3c;">33,065</span>
<span style="left:174.80px;top:456.00px;font-size:8.8px;line-height:8.8px;color:#3c3c3c;transform:scaleX(0.873);transform-origin:left center;-webkit-text-stroke:0.14px #3c3c3c;">Admin Expenses</span>
<span style="left:405.38px;top:456.00px;font-size:8.8px;line-height:8.8px;color:#3c3c3c;transform:scaleX(0.901);transform-origin:right center;-webkit-text-stroke:0.14px #3c3c3c;">4,304</span>
<span style="left:450.38px;top:456.00px;font-size:8.8px;line-height:8.8px;color:#3c3c3c;transform:scaleX(0.901);transform-origin:right center;-webkit-text-stroke:0.14px #3c3c3c;">4,006</span>
<span style="left:495.38px;top:456.00px;font-size:8.8px;line-height:8.8px;color:#3c3c3c;transform:scaleX(0.901);transform-origin:right center;-webkit-text-stroke:0.14px #3c3c3c;">4,099</span>
<span style="left:540.38px;top:456.00px;font-size:8.8px;line-height:8.8px;color:#3c3c3c;transform:scaleX(0.901);transform-origin:right center;-webkit-text-stroke:0.14px #3c3c3c;">3,897</span>
<span style="left:585.38px;top:456.00px;font-size:8.8px;line-height:8.8px;color:#3c3c3c;transform:scaleX(0.901);transform-origin:right center;-webkit-text-stroke:0.14px #3c3c3c;">3,284</span>
<span style="left:630.38px;top:456.00px;font-size:8.8px;line-height:8.8px;color:#3c3c3c;transform:scaleX(0.901);transform-origin:right center;-webkit-text-stroke:0.14px #3c3c3c;">5,131</span>
<span style="left:675.38px;top:456.00px;font-size:8.8px;line-height:8.8px;color:#3c3c3c;transform:scaleX(0.901);transform-origin:right center;-webkit-text-stroke:0.14px #3c3c3c;">5,036</span>
<span style="left:720.38px;top:456.00px;font-size:8.8px;line-height:8.8px;color:#3c3c3c;transform:scaleX(0.901);transform-origin:right center;-webkit-text-stroke:0.14px #3c3c3c;">5,167</span>
<span style="left:765.38px;top:456.00px;font-size:8.8px;line-height:8.8px;color:#3c3c3c;transform:scaleX(0.901);transform-origin:right center;-webkit-text-stroke:0.14px #3c3c3c;">3,867</span>
<span style="left:815.69px;top:456.00px;font-size:8.8px;line-height:8.8px;color:#3c3c3c;transform:scaleX(0.901);transform-origin:right center;-webkit-text-stroke:0.14px #3c3c3c;">38,793</span>
<span style="left:174.80px;top:468.00px;font-size:8.8px;line-height:8.8px;color:#1c1c1c;font-style:italic;transform:scaleX(0.935);transform-origin:left center;-webkit-text-stroke:0.14px #1c1c1c;">Total Administration</span>
<span style="left:395.59px;top:468.00px;font-size:8.8px;line-height:8.8px;color:#2a2a2a;font-style:italic;transform:scaleX(0.901);transform-origin:right center;-webkit-text-stroke:0.14px #2a2a2a;">333,226</span>
<span style="left:440.59px;top:468.00px;font-size:8.8px;line-height:8.8px;color:#2a2a2a;font-style:italic;transform:scaleX(0.901);transform-origin:right center;-webkit-text-stroke:0.14px #2a2a2a;">316,561</span>
<span style="left:485.59px;top:468.00px;font-size:8.8px;line-height:8.8px;color:#2a2a2a;font-style:italic;transform:scaleX(0.901);transform-origin:right center;-webkit-text-stroke:0.14px #2a2a2a;">320,947</span>
<span style="left:531.24px;top:468.00px;font-size:8.8px;line-height:8.8px;color:#2a2a2a;font-style:italic;transform:scaleX(0.920);transform-origin:right center;-webkit-text-stroke:0.14px #2a2a2a;">289,114</span>
<span style="left:575.59px;top:468.00px;font-size:8.8px;line-height:8.8px;color:#2a2a2a;font-style:italic;transform:scaleX(0.901);transform-origin:right center;-webkit-text-stroke:0.14px #2a2a2a;">257,523</span>
<span style="left:620.59px;top:468.00px;font-size:8.8px;line-height:8.8px;color:#2a2a2a;font-style:italic;transform:scaleX(0.901);transform-origin:right center;-webkit-text-stroke:0.14px #2a2a2a;">385,795</span>
<span style="left:665.59px;top:468.00px;font-size:8.8px;line-height:8.8px;color:#2a2a2a;font-style:italic;transform:scaleX(0.901);transform-origin:right center;-webkit-text-stroke:0.14px #2a2a2a;">378,219</span>
<span style="left:710.59px;top:468.00px;font-size:8.8px;line-height:8.8px;color:#2a2a2a;font-style:italic;transform:scaleX(0.901);transform-origin:right center;-webkit-text-stroke:0.14px #2a2a2a;">380,953</span>
<span style="left:756.24px;top:468.00px;font-size:8.8px;line-height:8.8px;color:#2a2a2a;font-style:italic;transform:scaleX(0.920);transform-origin:right center;-webkit-text-stroke:0.14px #2a2a2a;">311,431</span>
<span style="left:803.46px;top:468.00px;font-size:8.8px;line-height:8.8px;color:#2a2a2a;font-style:italic;transform:scaleX(0.900);transform-origin:right center;-webkit-text-stroke:0.14px #2a2a2a;">2,973,768</span>
<span style="left:174.80px;top:486.00px;font-size:8.8px;line-height:8.8px;color:#5288d2;font-weight:700;font-style:italic;transform:scaleX(0.849);transform-origin:left center;-webkit-text-stroke:0.05px #5288d2;">Finance &amp; Accounting</span>
<span style="left:174.80px;top:498.00px;font-size:8.8px;line-height:8.8px;color:#3c3c3c;transform:scaleX(0.890);transform-origin:left center;-webkit-text-stroke:0.14px #3c3c3c;">Salaries and Benefits</span>
<span style="left:400.49px;top:498.00px;font-size:8.8px;line-height:8.8px;color:#3c3c3c;transform:scaleX(0.901);transform-origin:right center;-webkit-text-stroke:0.14px #3c3c3c;">81,507</span>
<span style="left:445.49px;top:498.00px;font-size:8.8px;line-height:8.8px;color:#3c3c3c;transform:scaleX(0.901);transform-origin:right center;-webkit-text-stroke:0.14px #3c3c3c;">80,191</span>
<span style="left:490.49px;top:498.00px;font-size:8.8px;line-height:8.8px;color:#3c3c3c;transform:scaleX(0.901);transform-origin:right center;-webkit-text-stroke:0.14px #3c3c3c;">86,215</span>
<span style="left:535.49px;top:498.00px;font-size:8.8px;line-height:8.8px;color:#3c3c3c;transform:scaleX(0.901);transform-origin:right center;-webkit-text-stroke:0.14px #3c3c3c;">78,062</span>
<span style="left:580.49px;top:498.00px;font-size:8.8px;line-height:8.8px;color:#3c3c3c;transform:scaleX(0.901);transform-origin:right center;-webkit-text-stroke:0.14px #3c3c3c;">66,392</span>
<span style="left:625.49px;top:498.00px;font-size:8.8px;line-height:8.8px;color:#3c3c3c;transform:scaleX(0.901);transform-origin:right center;-webkit-text-stroke:0.14px #3c3c3c;">95,296</span>
<span style="left:670.49px;top:498.00px;font-size:8.8px;line-height:8.8px;color:#3c3c3c;transform:scaleX(0.901);transform-origin:right center;-webkit-text-stroke:0.14px #3c3c3c;">95,471</span>
<span style="left:710.59px;top:498.00px;font-size:8.8px;line-height:8.8px;color:#3c3c3c;transform:scaleX(0.901);transform-origin:right center;-webkit-text-stroke:0.14px #3c3c3c;">106,071</span>
<span style="left:760.49px;top:498.00px;font-size:8.8px;line-height:8.8px;color:#3c3c3c;transform:scaleX(0.901);transform-origin:right center;-webkit-text-stroke:0.14px #3c3c3c;">75,166</span>
<span style="left:810.79px;top:498.00px;font-size:8.8px;line-height:8.8px;color:#3c3c3c;transform:scaleX(0.901);transform-origin:right center;-webkit-text-stroke:0.14px #3c3c3c;">764,371</span>
<span style="left:211.79px;top:511.04px;font-size:8.6px;line-height:8.6px;color:#1f7346;font-weight:700;transform:scaleX(0.917);transform-origin:center center;-webkit-text-stroke:0.25px #1f7346;">PL Detail</span>
<span style="left:260.97px;top:511.04px;font-size:8.6px;line-height:8.6px;color:#505050;transform:scaleX(0.909);transform-origin:center center;">Notes</span>
<svg style="left:0;top:0" width="950" height="530" viewBox="0 0 950 530"><rect x="934.4" y="115" width="8.4" height="7.8" fill="#c4c4c4"/><rect x="935.1999999999999" y="115.8" width="6.800000000000001" height="6.199999999999999" fill="#fefefe"/><path d="M936.6 120 L938.6 117.8 L940.6 120Z" fill="#666"/><rect x="934.4" y="123.9" width="8.4" height="35.6" fill="#bdbdbd"/><rect x="935.1999999999999" y="124.7" width="6.800000000000001" height="34.0" fill="#fefefe"/><rect x="934.4" y="498.9" width="8.4" height="8" fill="#c4c4c4"/><rect x="935.1999999999999" y="499.7" width="6.800000000000001" height="6.4" fill="#fefefe"/><path d="M936.6 501.9 L938.6 504.1 L940.6 501.9Z" fill="#666"/><path d="M164 513.8 L161.8 515.6 L164 517.4Z M179 513.8 L181.2 515.6 L179 517.4Z" fill="#c6c6c6"/><rect x="205.4" y="521.6" width="49.4" height="1.3" fill="#2a7a4b"/><rect x="290.6" y="510.4" width="1" height="10.6" fill="#b9b9b9"/><rect x="608" y="513.6" width="1" height="1.1" fill="#b5b5b5"/><rect x="608" y="515.8000000000001" width="1" height="1.1" fill="#b5b5b5"/><rect x="608" y="518.0" width="1" height="1.1" fill="#b5b5b5"/><rect x="617.5" y="512.3" width="8.2" height="8" fill="#c4c4c4"/><rect x="618.3" y="513.0999999999999" width="6.6" height="6.4" fill="#fefefe"/><path d="M622.7 514.4 L620.5 516.3 L622.7 518.2Z" fill="#666"/><rect x="626.2" y="512.3" width="154.2" height="8" fill="#bdbdbd"/><rect x="627.0" y="513.0999999999999" width="152.6" height="6.4" fill="#fefefe"/><rect x="626.2" y="512.3" width="0.9" height="8" fill="#8c8c8c"/><rect x="922" y="512.3" width="8.8" height="8" fill="#c4c4c4"/><rect x="922.8" y="513.0999999999999" width="7.200000000000001" height="6.4" fill="#fefefe"/><path d="M925.5 514.4 L927.7 516.3 L925.5 518.2Z" fill="#666"/></svg>
<svg style="left:0;top:0" width="950" height="530" viewBox="0 0 950 530">
<path fill-rule="evenodd" fill="#ffffff" d="M0 0H950V530H0Z M12.5 0 H937.5 A12.5 12.5 0 0 1 950 12.5 V517.5 A12.5 12.5 0 0 1 937.5 530 H12.5 A12.5 12.5 0 0 1 0 517.5 V12.5 A12.5 12.5 0 0 1 12.5 0Z"/>
<path fill-rule="evenodd" fill="#a8abaf" d="M12.5 0 H937.5 A12.5 12.5 0 0 1 950 12.5 V517.5 A12.5 12.5 0 0 1 937.5 530 H12.5 A12.5 12.5 0 0 1 0 517.5 V12.5 A12.5 12.5 0 0 1 12.5 0Z M12.5 2.2 A10 10.3 0 0 0 2.5 12.5 V516.6 A10 10 0 0 0 12.5 526.6 H937.8 A10.2 10 0 0 0 948 516.6 V12.5 A10.2 10.3 0 0 0 937.8 2.2Z"/>
</svg>
</div></body></html>
